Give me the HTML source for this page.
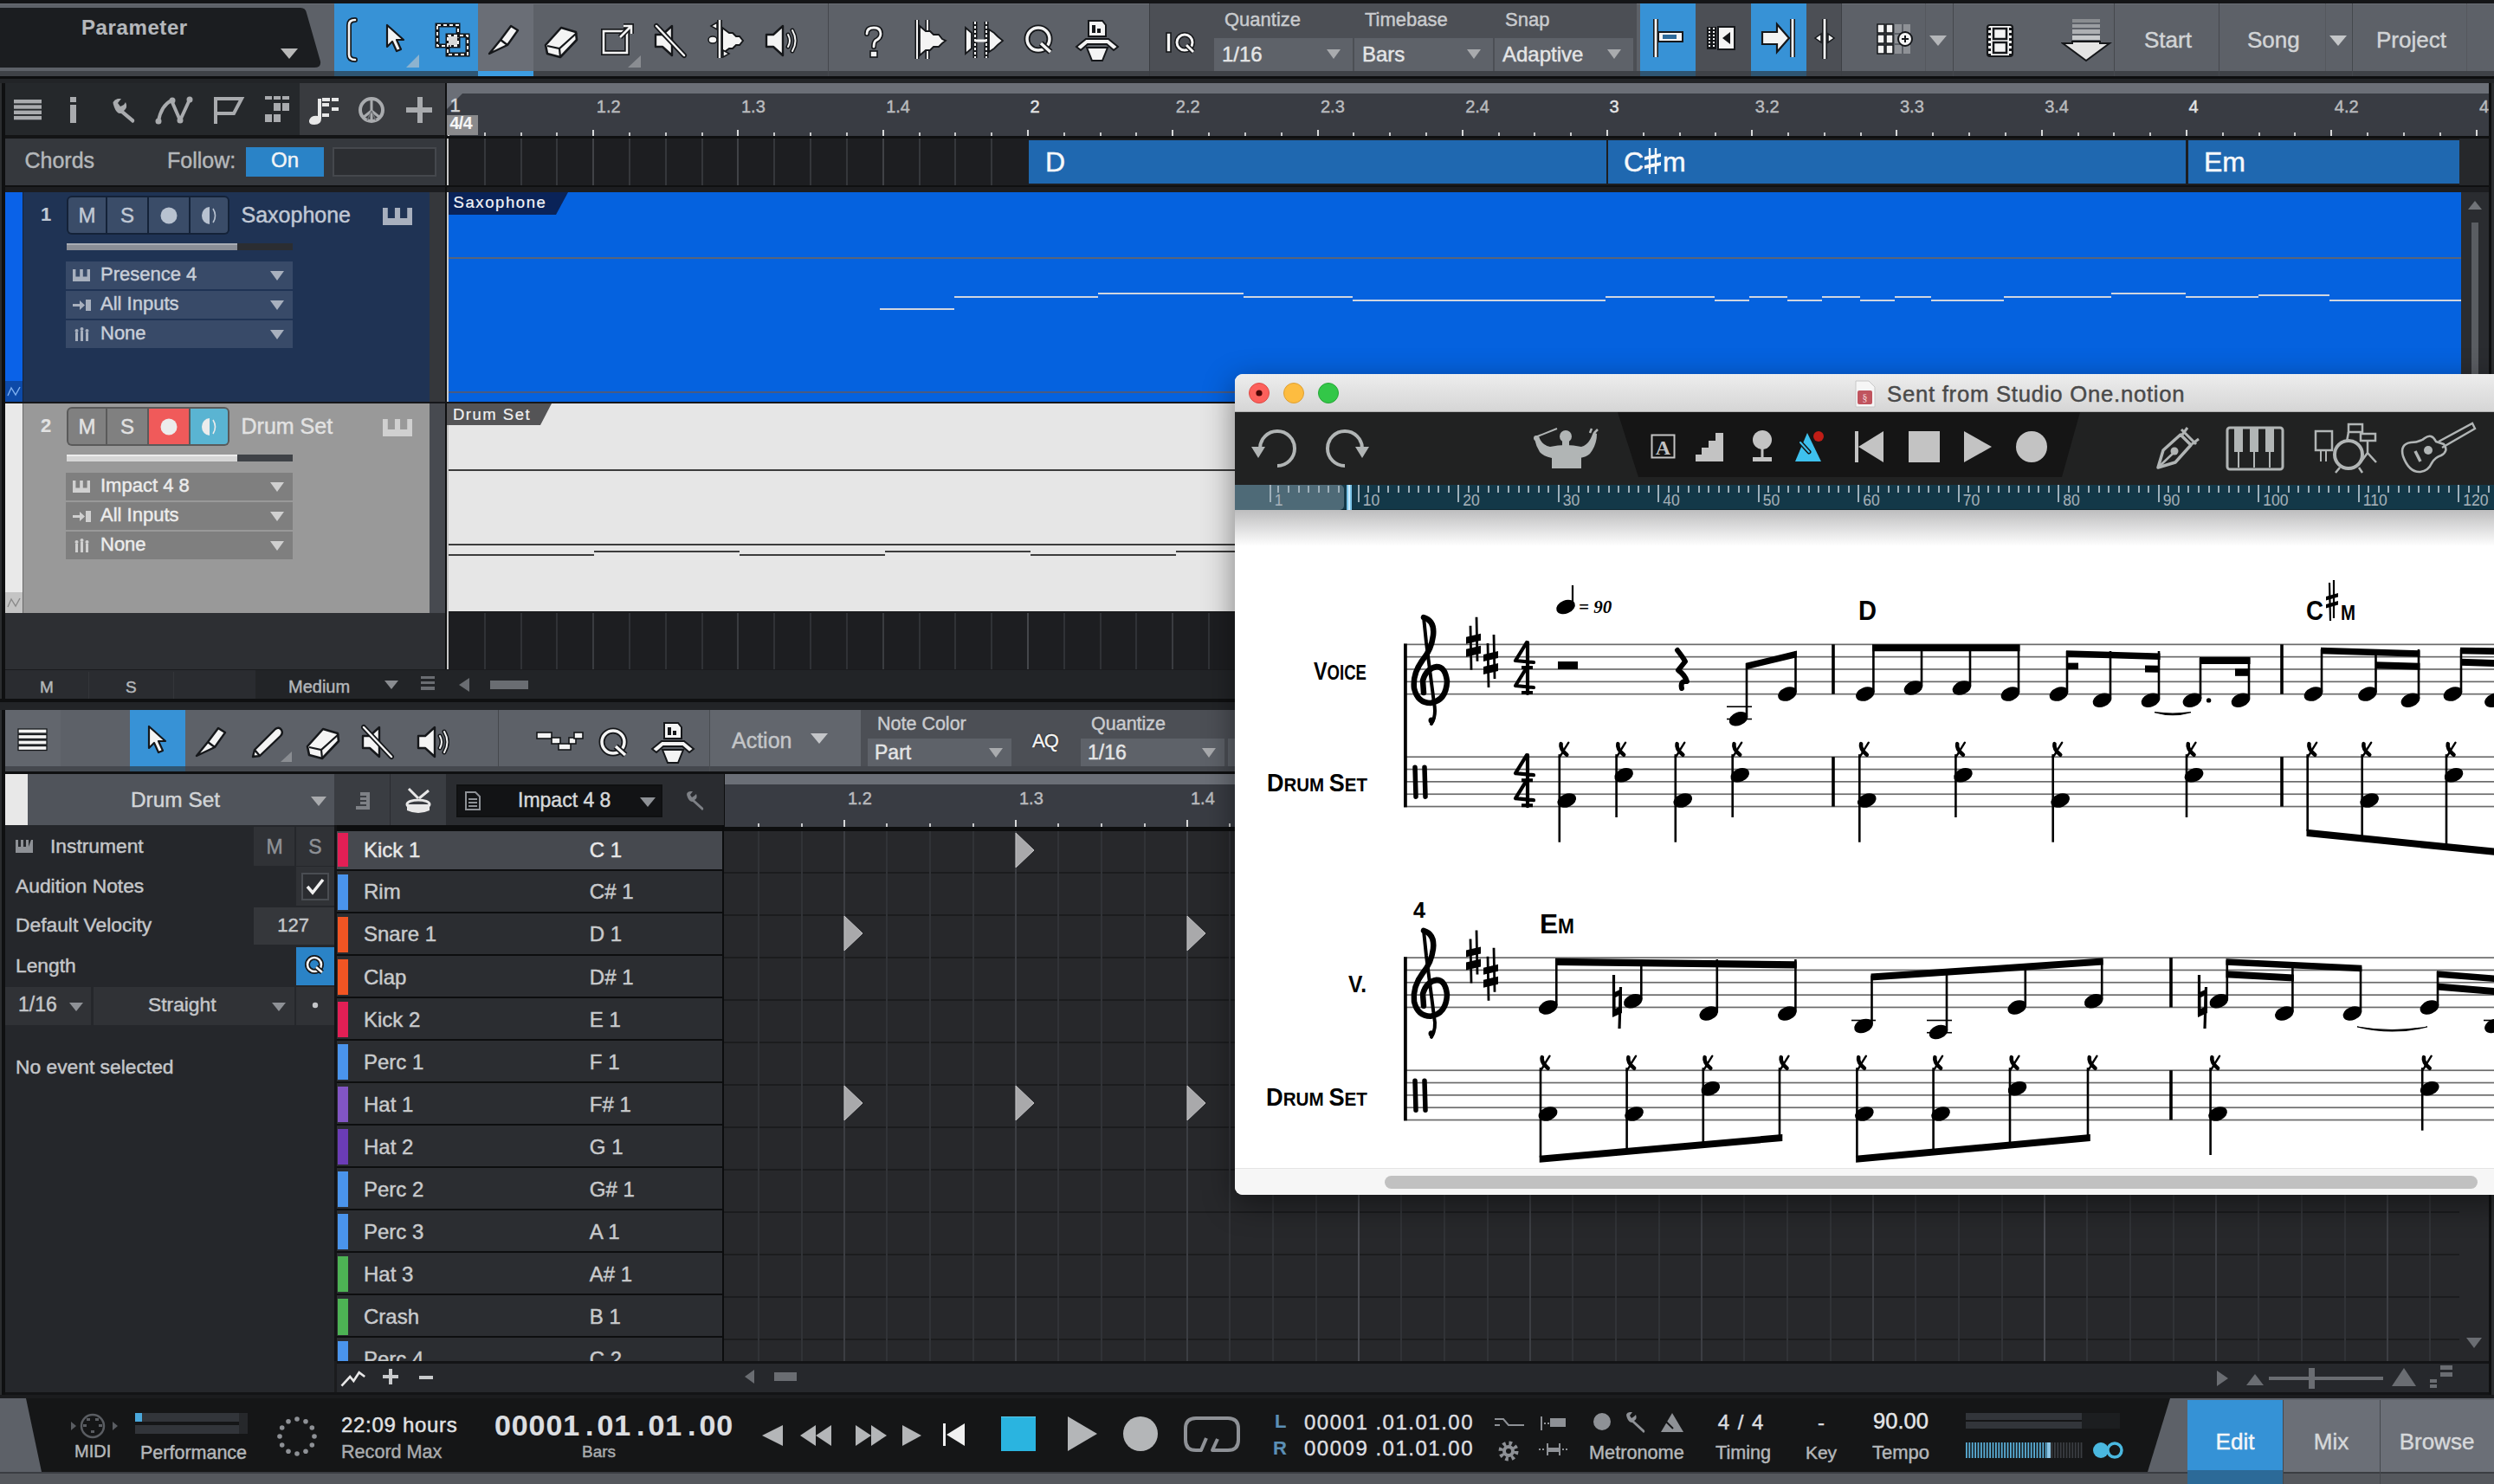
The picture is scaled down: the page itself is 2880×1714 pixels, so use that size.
<!DOCTYPE html>
<html><head><meta charset="utf-8"><style>
html,body{margin:0;padding:0;background:#1b1c1e;}
#root{position:relative;width:2880px;height:1714px;overflow:hidden;background:#1b1c1e;font-family:"Liberation Sans",sans-serif;}
#root div{position:absolute;}
#root .t{line-height:1;white-space:nowrap;-webkit-text-stroke:0.45px currentColor;}
</style></head><body><div id="root">
<div style="left:0px;top:0px;width:2880px;height:4px;background:#141517;"></div>
<div style="left:0px;top:4px;width:2880px;height:78px;background:#5d6168;"></div>
<div style="left:0px;top:4px;width:2880px;height:1px;background:#6a6e75;"></div>
<div style="left:0px;top:82px;width:2880px;height:6px;background:#3f4247;"></div>
<div style="left:0px;top:88px;width:2880px;height:3px;background:#0e0f10;"></div>
<div style="left:0px;top:91px;width:2880px;height:5px;background:#222427;"></div>
<svg style="position:absolute;left:0px;top:9px;" width="372" height="70" viewBox="0 0 372 70"><path d="M0,0 L347,0 Q353,0 354,6 L370,62 Q371,69 363,69 L0,69 Z" fill="#1b1d20"/></svg>
<div class="t" style="left:94.0px;top:19.7px;font-size:24px;color:#b4b7bb;font-weight:700;-webkit-text-stroke:0.15px currentColor;letter-spacing:0.6px;">Parameter</div>
<svg style="position:absolute;left:324.0px;top:56.0px;" width="20" height="12" viewBox="0 0 20 12"><polygon points="0,0 20,0 10.0,12" fill="#b8b8b8"/></svg>
<div style="left:386px;top:4px;width:166px;height:78px;background:#3792d6;"></div>
<div style="left:386px;top:82px;width:166px;height:6px;background:#2f5673;"></div>
<div style="left:552px;top:4px;width:64px;height:78px;background:#6a6e76;"></div>
<div style="left:552px;top:82px;width:64px;height:6px;background:#3d9de2;"></div>
<svg style="position:absolute;left:396px;top:19px;" width="22" height="54" viewBox="0 0 22 54"><path d="M14,4 Q7,4 7,10 L7,44 Q7,50 14,50" fill="none" stroke="#15171a" stroke-width="6" stroke-linecap="round"/><path d="M14,4 Q7,4 7,10 L7,44 Q7,50 14,50" fill="none" stroke="#f4f4f4" stroke-width="2.6" stroke-linecap="round"/></svg>
<svg style="position:absolute;left:444px;top:27px;" width="28" height="38" viewBox="0 0 28 38"><path d="M3,2 L3,27 L9,21 L14,32 L19,30 L14,19 L22,19 Z" fill="#f4f4f4" stroke="#15171a" stroke-width="2.2" stroke-linejoin="round"/></svg>
<svg style="position:absolute;left:469px;top:63px;" width="16" height="16" viewBox="0 0 16 16"><polygon points="15,0 15,15 0,15" fill="#8db3cf"/></svg>
<svg style="position:absolute;left:502px;top:26px;" width="42" height="40" viewBox="0 0 42 40"><rect x="3" y="3" width="24" height="24" fill="none" stroke="#15171a" stroke-width="5"/><rect x="3" y="3" width="24" height="24" fill="none" stroke="#f4f4f4" stroke-width="2" stroke-dasharray="4 3"/><rect x="15" y="15" width="23" height="22" fill="none" stroke="#15171a" stroke-width="5"/><rect x="15" y="15" width="23" height="22" fill="none" stroke="#f4f4f4" stroke-width="2" stroke-dasharray="4 3"/><rect x="16" y="16" width="10" height="10" fill="#d8d8d8"/></svg>
<svg style="position:absolute;left:562px;top:26px;" width="42" height="40" viewBox="0 0 42 40"><path d="M3,36 L16,20 L28,4 L36,9 L24,26 Z M16,20 L24,26" fill="#f4f4f4" stroke="#15171a" stroke-width="2.4" stroke-linejoin="round"/></svg>
<svg style="position:absolute;left:628px;top:26px;" width="42" height="42" viewBox="0 0 42 42"><path d="M2,26 L20,6 L37,11 L38,20 L19,40 L4,36 Z" fill="#f4f4f4" stroke="#15171a" stroke-width="2.6" stroke-linejoin="round"/><path d="M4,27 L18,30 L38,12 M18,30 L19,40" fill="none" stroke="#15171a" stroke-width="2.2"/></svg>
<svg style="position:absolute;left:690px;top:24px;" width="44" height="42" viewBox="0 0 44 42"><rect x="7" y="12" width="27" height="25" fill="none" stroke="#15171a" stroke-width="6"/><rect x="7" y="12" width="27" height="25" fill="none" stroke="#f4f4f4" stroke-width="2.6"/><path d="M26,19 L38,7 M30,6 L39,6 L39,15" fill="none" stroke="#15171a" stroke-width="6"/><path d="M26,19 L38,7 M30,6 L39,6 L39,15" fill="none" stroke="#f4f4f4" stroke-width="2.6"/></svg>
<svg style="position:absolute;left:725px;top:64px;" width="16" height="14" viewBox="0 0 16 14"><polygon points="15,0 15,14 0,14" fill="#8a8d92"/></svg>
<svg style="position:absolute;left:754px;top:26px;" width="42" height="42" viewBox="0 0 42 42"><path d="M3,14 L11,14 L22,4 L22,38 L11,28 L3,28 Z" fill="#f4f4f4" stroke="#15171a" stroke-width="2.4" stroke-linejoin="round"/><path d="M4,4 L36,38" stroke="#15171a" stroke-width="6" stroke-linecap="round"/><path d="M4,4 L36,38" stroke="#f4f4f4" stroke-width="2.5" stroke-linecap="round"/></svg>
<svg style="position:absolute;left:814px;top:20px;" width="50" height="50" viewBox="0 0 50 50"><path d="M17,3 L17,47" stroke="#15171a" stroke-width="6"/><path d="M17,3 L17,47" stroke="#f4f4f4" stroke-width="2.5"/><path d="M20,12 L28,18 L32,18 L36,22 L40,22 L44,27 L40,32 L36,32 L32,36 L28,36 L20,42 Z" fill="#f4f4f4" stroke="#15171a" stroke-width="2"/><path d="M14,6 L7,10 L14,14 Z M21,38 L28,42 L21,46 Z" fill="#f4f4f4" stroke="#15171a" stroke-width="1.5"/><ellipse cx="9" cy="26" rx="5" ry="4" fill="#f4f4f4" stroke="#15171a" stroke-width="1.5"/></svg>
<svg style="position:absolute;left:882px;top:26px;" width="44" height="42" viewBox="0 0 44 42"><path d="M3,14 L11,14 L22,4 L22,38 L11,28 L3,28 Z" fill="#f4f4f4" stroke="#15171a" stroke-width="2.4" stroke-linejoin="round"/><path d="M28,14 Q32,21 28,28 M33,9 Q40,21 33,33" fill="none" stroke="#15171a" stroke-width="5" stroke-linecap="round"/><path d="M28,14 Q32,21 28,28 M33,9 Q40,21 33,33" fill="none" stroke="#f4f4f4" stroke-width="2" stroke-linecap="round"/></svg>
<div style="left:956px;top:4px;width:1px;height:84px;background:#45484d;"></div>
<svg style="position:absolute;left:994px;top:28px;" width="30" height="40" viewBox="0 0 30 40"><path d="M7,11 Q7,4 15,4 Q23,4 23,11 Q23,16 17,19 Q15,21 15,26" fill="none" stroke="#15171a" stroke-width="6" stroke-linecap="round"/><path d="M7,11 Q7,4 15,4 Q23,4 23,11 Q23,16 17,19 Q15,21 15,26" fill="none" stroke="#f4f4f4" stroke-width="2.8" stroke-linecap="round"/><rect x="11" y="31" width="8" height="7" fill="#f4f4f4" stroke="#15171a" stroke-width="1.6"/></svg>
<svg style="position:absolute;left:1054px;top:20px;" width="46" height="52" viewBox="0 0 46 52"><path d="M5,3 L5,48 M17,3 L17,48" stroke="#15171a" stroke-width="5"/><path d="M5,3 L5,48 M17,3 L17,48" stroke="#f4f4f4" stroke-width="2"/><path d="M8,10 L15,16 L20,16 L24,20 L30,20 L34,25 L38,27 L34,30 L30,34 L24,34 L20,38 L15,38 L8,44 Z" fill="#f4f4f4" stroke="#15171a" stroke-width="1.8"/></svg>
<svg style="position:absolute;left:1112px;top:20px;" width="50" height="52" viewBox="0 0 50 52"><path d="M14,5 L14,47 M27,5 L27,47" stroke="#15171a" stroke-width="5" /><path d="M14,5 L14,47 M27,5 L27,47" stroke="#f4f4f4" stroke-width="2" stroke-dasharray="3 2"/><path d="M3,12 L10,18 L10,36 L3,42 Z M30,14 L36,18 L40,22 L46,27 L40,32 L36,36 L30,40 Z" fill="#f4f4f4" stroke="#15171a" stroke-width="1.8"/><path d="M14,27 L27,27" stroke="#f4f4f4" stroke-width="3"/></svg>
<svg style="position:absolute;left:1182px;top:26px;" width="38" height="42" viewBox="0 0 38 42"><circle cx="17" cy="19" r="13" fill="none" stroke="#15171a" stroke-width="7"/><circle cx="17" cy="19" r="13" fill="none" stroke="#f4f4f4" stroke-width="3.5"/><path d="M20,24 L31,34" stroke="#15171a" stroke-width="7"/><path d="M20,24 L31,34" stroke="#f4f4f4" stroke-width="3.5"/></svg>
<svg style="position:absolute;left:1240px;top:20px;" width="54" height="52" viewBox="0 0 54 52"><path d="M17,4 L33,4 L37,9 L37,22 L17,22 Z" fill="#f4f4f4" stroke="#15171a" stroke-width="2"/><rect x="21" y="9" width="4" height="9" fill="#15171a"/><rect x="27" y="13" width="4" height="5" fill="#15171a"/><path d="M3,34 L14,25 L40,25 L51,34 L46,38 L38,31 L16,31 L8,38 Z" fill="#f4f4f4" stroke="#15171a" stroke-width="2"/><path d="M15,35 L39,35 L33,50 L21,50 Z" fill="#f4f4f4" stroke="#15171a" stroke-width="2"/></svg>
<div style="left:1327px;top:4px;width:563px;height:78px;background:#4c4f55;"></div>
<div style="left:1327px;top:4px;width:1px;height:84px;background:#3a3d42;"></div>
<svg style="position:absolute;left:1344px;top:32px;" width="40" height="34" viewBox="0 0 40 34"><rect x="3" y="6" width="5" height="22" fill="#f4f4f4" stroke="#15171a" stroke-width="1.6"/><circle cx="24" cy="17" r="9" fill="none" stroke="#15171a" stroke-width="6"/><circle cx="24" cy="17" r="9" fill="none" stroke="#f4f4f4" stroke-width="3"/><path d="M26,20 L34,28" stroke="#15171a" stroke-width="6"/><path d="M26,20 L34,28" stroke="#f4f4f4" stroke-width="3"/></svg>
<div style="left:1402px;top:44px;width:160px;height:38px;background:#5e6269;"></div>
<div class="t" style="left:1414.0px;top:12.4px;font-size:22px;color:#c9cbce;font-weight:400;">Quantize</div>
<div class="t" style="left:1411.0px;top:50.7px;font-size:24px;color:#e4e5e6;font-weight:400;">1/16</div>
<svg style="position:absolute;left:1532.0px;top:56.5px;" width="16" height="11" viewBox="0 0 16 11"><polygon points="0,0 16,0 8.0,11" fill="#a9abae"/></svg>
<div style="left:1564px;top:44px;width:160px;height:38px;background:#5e6269;"></div>
<div class="t" style="left:1576.0px;top:12.4px;font-size:22px;color:#c9cbce;font-weight:400;">Timebase</div>
<div class="t" style="left:1573.0px;top:50.7px;font-size:24px;color:#e4e5e6;font-weight:400;">Bars</div>
<svg style="position:absolute;left:1694.0px;top:56.5px;" width="16" height="11" viewBox="0 0 16 11"><polygon points="0,0 16,0 8.0,11" fill="#a9abae"/></svg>
<div style="left:1726px;top:44px;width:160px;height:38px;background:#5e6269;"></div>
<div class="t" style="left:1738.0px;top:12.4px;font-size:22px;color:#c9cbce;font-weight:400;">Snap</div>
<div class="t" style="left:1735.0px;top:50.7px;font-size:24px;color:#e4e5e6;font-weight:400;">Adaptive</div>
<svg style="position:absolute;left:1856.0px;top:56.5px;" width="16" height="11" viewBox="0 0 16 11"><polygon points="0,0 16,0 8.0,11" fill="#a9abae"/></svg>
<div style="left:1894px;top:4px;width:64px;height:78px;background:#3792d6;"></div>
<div style="left:1894px;top:82px;width:64px;height:6px;background:#2f5673;"></div>
<div style="left:1958px;top:4px;width:64px;height:78px;background:#4c4f55;"></div>
<div style="left:2022px;top:4px;width:64px;height:78px;background:#3792d6;"></div>
<div style="left:2022px;top:82px;width:64px;height:6px;background:#2f5673;"></div>
<div style="left:2086px;top:4px;width:40px;height:78px;background:#4c4f55;"></div>
<svg style="position:absolute;left:1906px;top:18px;" width="42" height="52" viewBox="0 0 42 52"><path d="M6,4 L6,48" stroke="#15171a" stroke-width="6"/><path d="M6,4 L6,48" stroke="#f4f4f4" stroke-width="2.8"/><rect x="9" y="19" width="28" height="11" fill="#f4f4f4" stroke="#15171a" stroke-width="2"/><rect x="14" y="22" width="16" height="5" fill="#2d6a9a"/></svg>
<svg style="position:absolute;left:1968px;top:28px;" width="42" height="34" viewBox="0 0 42 34"><rect x="3" y="3" width="11" height="26" fill="#15171a"/><path d="M6,4 L6,28 M11,4 L11,28" stroke="#f4f4f4" stroke-width="2" stroke-dasharray="2 2"/><rect x="16" y="3" width="19" height="26" fill="#f4f4f4" stroke="#15171a" stroke-width="2"/><polygon points="30,9 21,16 30,23" fill="#15171a"/></svg>
<svg style="position:absolute;left:2032px;top:18px;" width="46" height="52" viewBox="0 0 46 52"><path d="M38,4 L38,48" stroke="#15171a" stroke-width="6"/><path d="M38,4 L38,48" stroke="#f4f4f4" stroke-width="2.8"/><path d="M3,19 L20,19 L20,10 L34,26 L20,42 L20,33 L3,33 Z" fill="#f4f4f4" stroke="#15171a" stroke-width="2.2"/></svg>
<svg style="position:absolute;left:2094px;top:20px;" width="26" height="50" viewBox="0 0 26 50"><path d="M13,2 L13,48" stroke="#15171a" stroke-width="6"/><path d="M13,2 L13,48" stroke="#f4f4f4" stroke-width="2.8"/><polygon points="9,19 2,24 9,29" fill="#f4f4f4" stroke="#15171a" stroke-width="1.5"/><polygon points="17,19 24,24 17,29" fill="#f4f4f4" stroke="#15171a" stroke-width="1.5"/></svg>
<div style="left:2126px;top:4px;width:1px;height:84px;background:#3d4045;"></div>
<svg style="position:absolute;left:2166px;top:26px;" width="52" height="40" viewBox="0 0 52 40"><rect x="2" y="2" width="8" height="10" fill="#f4f4f4" stroke="#15171a" stroke-width="1.5"/><rect x="12" y="2" width="8" height="10" fill="#f4f4f4" stroke="#15171a" stroke-width="1.5"/><rect x="2" y="14" width="8" height="10" fill="#f4f4f4" stroke="#15171a" stroke-width="1.5"/><rect x="12" y="14" width="8" height="10" fill="#f4f4f4" stroke="#15171a" stroke-width="1.5"/><rect x="2" y="26" width="8" height="10" fill="#f4f4f4" stroke="#15171a" stroke-width="1.5"/><rect x="12" y="26" width="8" height="10" fill="#f4f4f4" stroke="#15171a" stroke-width="1.5"/><rect x="22" y="2" width="8" height="10" fill="#8e9196"/><rect x="32" y="2" width="8" height="10" fill="#8e9196"/><rect x="22" y="14" width="8" height="10" fill="#8e9196"/><rect x="32" y="14" width="8" height="10" fill="#8e9196"/><rect x="22" y="26" width="8" height="10" fill="#8e9196"/><rect x="32" y="26" width="8" height="10" fill="#8e9196"/><circle cx="34" cy="19" r="8" fill="#f4f4f4" stroke="#15171a" stroke-width="2"/><path d="M30,19 L38,19 M34,15 L34,23" stroke="#15171a" stroke-width="2"/></svg>
<svg style="position:absolute;left:2228.0px;top:41.0px;" width="20" height="12" viewBox="0 0 20 12"><polygon points="0,0 20,0 10.0,12" fill="#b4b6b9"/></svg>
<div style="left:2223px;top:4px;width:1px;height:78px;background:#55585e;"></div>
<div style="left:2255px;top:4px;width:1px;height:84px;background:#45484d;"></div>
<svg style="position:absolute;left:2292px;top:26px;" width="36" height="42" viewBox="0 0 36 42"><rect x="3" y="3" width="29" height="36" rx="3" fill="#f4f4f4" stroke="#15171a" stroke-width="2.2"/><rect x="10" y="7" width="15" height="12" fill="#f4f4f4" stroke="#15171a" stroke-width="2.5"/><rect x="10" y="23" width="15" height="12" fill="#f4f4f4" stroke="#15171a" stroke-width="2.5"/><rect x="4" y="6" width="3" height="3" fill="#15171a"/><rect x="28" y="6" width="3" height="3" fill="#15171a"/><rect x="4" y="12" width="3" height="3" fill="#15171a"/><rect x="28" y="12" width="3" height="3" fill="#15171a"/><rect x="4" y="18" width="3" height="3" fill="#15171a"/><rect x="28" y="18" width="3" height="3" fill="#15171a"/><rect x="4" y="24" width="3" height="3" fill="#15171a"/><rect x="28" y="24" width="3" height="3" fill="#15171a"/><rect x="4" y="30" width="3" height="3" fill="#15171a"/><rect x="28" y="30" width="3" height="3" fill="#15171a"/><rect x="4" y="36" width="3" height="3" fill="#15171a"/><rect x="28" y="36" width="3" height="3" fill="#15171a"/></svg>
<svg style="position:absolute;left:2380px;top:20px;" width="60" height="52" viewBox="0 0 60 52"><rect x="13" y="2" width="32" height="4" fill="#8a8d91"/><rect x="13" y="8" width="32" height="4" fill="#9a9da1"/><rect x="13" y="14" width="32" height="5" fill="#aeb0b3"/><rect x="13" y="21" width="32" height="5" fill="#c6c8ca"/><path d="M13,28 L45,28 L45,30 L56,30 L29,50 L2,30 L13,30 Z" fill="#e4e4e4" stroke="#15171a" stroke-width="2"/></svg>
<div style="left:2441px;top:4px;width:1px;height:84px;background:#45484d;"></div>
<div class="t" style="left:2476.0px;top:33.0px;font-size:26px;color:#d2d4d6;font-weight:400;">Start</div>
<div style="left:2562px;top:4px;width:1px;height:84px;background:#45484d;"></div>
<div class="t" style="left:2595.0px;top:33.0px;font-size:26px;color:#d2d4d6;font-weight:400;">Song</div>
<svg style="position:absolute;left:2690.0px;top:41.0px;" width="20" height="12" viewBox="0 0 20 12"><polygon points="0,0 20,0 10.0,12" fill="#c4c6c8"/></svg>
<div style="left:2685px;top:4px;width:1px;height:78px;background:#55585e;"></div>
<div style="left:2716px;top:4px;width:1px;height:84px;background:#45484d;"></div>
<div class="t" style="left:2744.0px;top:33.0px;font-size:26px;color:#d2d4d6;font-weight:400;">Project</div>
<div style="left:2848px;top:4px;width:1px;height:78px;background:#55585e;"></div>
<div style="left:0px;top:96px;width:6px;height:711px;background:#0f1011;"></div>
<div style="left:0px;top:96px;width:2px;height:711px;background:#2b2d2f;"></div>
<div style="left:6px;top:96px;width:340px;height:60px;background:#25282b;"></div>
<div style="left:346px;top:96px;width:168px;height:60px;background:#393b3f;"></div>
<div style="left:6px;top:156px;width:507px;height:4px;background:#131415;"></div>
<div style="left:6px;top:160px;width:508px;height:54px;background:#35383d;"></div>
<div style="left:6px;top:214px;width:2868px;height:2px;background:#0f1011;"></div>
<div style="left:6px;top:216px;width:2868px;height:6px;background:#1c1d20;"></div>
<div style="left:514px;top:96px;width:2px;height:711px;background:#0f1011;"></div>
<svg style="position:absolute;left:16px;top:115px;" width="32" height="24" viewBox="0 0 32 24"><rect x="0" y="0.0" width="32" height="4.4" fill="#a9abae"/><rect x="0" y="6.3" width="32" height="4.4" fill="#a9abae"/><rect x="0" y="12.6" width="32" height="4.4" fill="#a9abae"/><rect x="0" y="18.9" width="32" height="4.4" fill="#a9abae"/></svg>
<svg style="position:absolute;left:81px;top:112px;" width="8" height="31" viewBox="0 0 8 31"><rect x="0" y="0" width="7" height="6" fill="#a9abae"/><rect x="0" y="9" width="7" height="21" fill="#a9abae"/></svg>
<svg style="position:absolute;left:126px;top:112px;" width="32" height="32" viewBox="0 0 32 32"><path d="M6,12 Q2,4 10,2 L14,2 L10,7 L13,11 L17,9 L19,6 Q22,12 17,16 L29,26 Q30,29 27,30 L14,19 Q9,20 6,12 Z" fill="#a9abae"/></svg>
<svg style="position:absolute;left:178px;top:110px;" width="50" height="36" viewBox="0 0 50 36"><path d="M5,30 Q8,12 20,6 L30,29 L41,5" fill="none" stroke="#a9abae" stroke-width="4" stroke-linejoin="round"/><circle cx="5" cy="30" r="3.5" fill="#a9abae"/><circle cx="21" cy="6" r="3.5" fill="#a9abae"/><circle cx="30" cy="29" r="3.5" fill="#a9abae"/><circle cx="41" cy="5" r="3.5" fill="#a9abae"/></svg>
<svg style="position:absolute;left:247px;top:111px;" width="36" height="34" viewBox="0 0 36 34"><path d="M2,32 L2,3 L32,3 L23,20 L2,20" fill="none" stroke="#a9abae" stroke-width="4"/></svg>
<svg style="position:absolute;left:306px;top:111px;" width="30" height="34" viewBox="0 0 30 34"><rect x="0" y="0" width="8" height="4" fill="#a9abae"/><rect x="10" y="0" width="8" height="4" fill="#a9abae"/><rect x="20" y="0" width="8" height="4" fill="#a9abae"/><rect x="10" y="8" width="8" height="9" fill="#a9abae"/><rect x="20" y="8" width="8" height="9" fill="#a9abae"/><rect x="0" y="21" width="8" height="9" fill="#a9abae"/><rect x="10" y="21" width="8" height="9" fill="#a9abae"/></svg>
<svg style="position:absolute;left:355px;top:111px;" width="38" height="34" viewBox="0 0 38 34"><path d="M12,3 L16,3 L16,26 Q16,33 8,33 Q1,33 2,28 Q4,22 12,23 Z" fill="#e8e8e8"/><rect x="17" y="2" width="9" height="4" fill="#e8e8e8"/><rect x="17" y="8" width="8" height="4" fill="#e8e8e8"/><rect x="17" y="20" width="8" height="4" fill="#e8e8e8"/><rect x="28" y="2" width="8" height="4" fill="#e8e8e8"/><rect x="28" y="13" width="8" height="4" fill="#e8e8e8"/></svg>
<svg style="position:absolute;left:413px;top:111px;" width="32" height="32" viewBox="0 0 32 32"><circle cx="16" cy="16" r="13" fill="none" stroke="#a9abae" stroke-width="4"/><path d="M16,3 L16,29 M16,17 L6,25 M16,17 L26,25" stroke="#a9abae" stroke-width="3" fill="none"/><path d="M16,17 L11,28 M16,17 L21,28" stroke="#707276" stroke-width="1.5"/></svg>
<svg style="position:absolute;left:469px;top:112px;" width="32" height="32" viewBox="0 0 32 32"><rect x="13" y="0" width="6" height="30" fill="#a9abae"/><rect x="0" y="12" width="30" height="6" fill="#a9abae"/></svg>
<div class="t" style="left:28.5px;top:173.4px;font-size:25px;color:#b4b7ba;font-weight:400;">Chords</div>
<div class="t" style="left:193.0px;top:173.4px;font-size:25px;color:#b4b7ba;font-weight:400;">Follow:</div>
<div style="left:284px;top:170px;width:90px;height:34px;background:#2a83c7;"></div>
<div class="t" style="left:284.0px;top:173.3px;font-size:24px;color:#f2f4f6;font-weight:400;width:90px;text-align:center;">On</div>
<div style="left:384px;top:170px;width:120px;height:34px;background:#45484d;"></div>
<div style="left:386px;top:172px;width:116px;height:30px;background:#2c2e32;"></div>
<div style="left:516px;top:96px;width:2358px;height:12px;background:#6b6f77;"></div>
<div style="left:516px;top:108px;width:2358px;height:49px;background:#393c43;"></div>
<svg style="position:absolute;left:516px;top:107px;" width="20" height="20" viewBox="0 0 20 20"><polygon points="0,0 19,0 0,19" fill="#6b6f77"/></svg>
<div style="left:516px;top:157px;width:2358px;height:3px;background:#0f1011;"></div>
<div style="left:517px;top:150px;width:2px;height:7px;background:#d8d9da;"></div>
<div style="left:559px;top:153px;width:2px;height:4px;background:#c9cacc;"></div>
<div style="left:601px;top:153px;width:2px;height:4px;background:#c9cacc;"></div>
<div style="left:642px;top:153px;width:2px;height:4px;background:#c9cacc;"></div>
<div style="left:684px;top:150px;width:2px;height:7px;background:#d8d9da;"></div>
<div style="left:726px;top:153px;width:2px;height:4px;background:#c9cacc;"></div>
<div style="left:768px;top:153px;width:2px;height:4px;background:#c9cacc;"></div>
<div style="left:810px;top:153px;width:2px;height:4px;background:#c9cacc;"></div>
<div style="left:851px;top:150px;width:2px;height:7px;background:#d8d9da;"></div>
<div style="left:893px;top:153px;width:2px;height:4px;background:#c9cacc;"></div>
<div style="left:935px;top:153px;width:2px;height:4px;background:#c9cacc;"></div>
<div style="left:977px;top:153px;width:2px;height:4px;background:#c9cacc;"></div>
<div style="left:1019px;top:150px;width:2px;height:7px;background:#d8d9da;"></div>
<div style="left:1061px;top:153px;width:2px;height:4px;background:#c9cacc;"></div>
<div style="left:1102px;top:153px;width:2px;height:4px;background:#c9cacc;"></div>
<div style="left:1144px;top:153px;width:2px;height:4px;background:#c9cacc;"></div>
<div style="left:1186px;top:150px;width:2px;height:7px;background:#d8d9da;"></div>
<div style="left:1228px;top:153px;width:2px;height:4px;background:#c9cacc;"></div>
<div style="left:1270px;top:153px;width:2px;height:4px;background:#c9cacc;"></div>
<div style="left:1311px;top:153px;width:2px;height:4px;background:#c9cacc;"></div>
<div style="left:1353px;top:150px;width:2px;height:7px;background:#d8d9da;"></div>
<div style="left:1395px;top:153px;width:2px;height:4px;background:#c9cacc;"></div>
<div style="left:1437px;top:153px;width:2px;height:4px;background:#c9cacc;"></div>
<div style="left:1479px;top:153px;width:2px;height:4px;background:#c9cacc;"></div>
<div style="left:1521px;top:150px;width:2px;height:7px;background:#d8d9da;"></div>
<div style="left:1562px;top:153px;width:2px;height:4px;background:#c9cacc;"></div>
<div style="left:1604px;top:153px;width:2px;height:4px;background:#c9cacc;"></div>
<div style="left:1646px;top:153px;width:2px;height:4px;background:#c9cacc;"></div>
<div style="left:1688px;top:150px;width:2px;height:7px;background:#d8d9da;"></div>
<div style="left:1730px;top:153px;width:2px;height:4px;background:#c9cacc;"></div>
<div style="left:1771px;top:153px;width:2px;height:4px;background:#c9cacc;"></div>
<div style="left:1813px;top:153px;width:2px;height:4px;background:#c9cacc;"></div>
<div style="left:1855px;top:150px;width:2px;height:7px;background:#d8d9da;"></div>
<div style="left:1897px;top:153px;width:2px;height:4px;background:#c9cacc;"></div>
<div style="left:1939px;top:153px;width:2px;height:4px;background:#c9cacc;"></div>
<div style="left:1980px;top:153px;width:2px;height:4px;background:#c9cacc;"></div>
<div style="left:2022px;top:150px;width:2px;height:7px;background:#d8d9da;"></div>
<div style="left:2064px;top:153px;width:2px;height:4px;background:#c9cacc;"></div>
<div style="left:2106px;top:153px;width:2px;height:4px;background:#c9cacc;"></div>
<div style="left:2148px;top:153px;width:2px;height:4px;background:#c9cacc;"></div>
<div style="left:2189px;top:150px;width:2px;height:7px;background:#d8d9da;"></div>
<div style="left:2231px;top:153px;width:2px;height:4px;background:#c9cacc;"></div>
<div style="left:2273px;top:153px;width:2px;height:4px;background:#c9cacc;"></div>
<div style="left:2315px;top:153px;width:2px;height:4px;background:#c9cacc;"></div>
<div style="left:2357px;top:150px;width:2px;height:7px;background:#d8d9da;"></div>
<div style="left:2399px;top:153px;width:2px;height:4px;background:#c9cacc;"></div>
<div style="left:2440px;top:153px;width:2px;height:4px;background:#c9cacc;"></div>
<div style="left:2482px;top:153px;width:2px;height:4px;background:#c9cacc;"></div>
<div style="left:2524px;top:150px;width:2px;height:7px;background:#d8d9da;"></div>
<div style="left:2566px;top:153px;width:2px;height:4px;background:#c9cacc;"></div>
<div style="left:2608px;top:153px;width:2px;height:4px;background:#c9cacc;"></div>
<div style="left:2649px;top:153px;width:2px;height:4px;background:#c9cacc;"></div>
<div style="left:2691px;top:150px;width:2px;height:7px;background:#d8d9da;"></div>
<div style="left:2733px;top:153px;width:2px;height:4px;background:#c9cacc;"></div>
<div style="left:2775px;top:153px;width:2px;height:4px;background:#c9cacc;"></div>
<div style="left:2817px;top:153px;width:2px;height:4px;background:#c9cacc;"></div>
<div style="left:2859px;top:150px;width:2px;height:7px;background:#d8d9da;"></div>
<div class="t" style="left:519.5px;top:111.4px;font-size:22px;color:#d4d6d8;font-weight:400;">1</div>
<div class="t" style="left:688.8px;top:113.1px;font-size:20px;color:#b9bbbe;font-weight:400;">1.2</div>
<div class="t" style="left:856.0px;top:113.1px;font-size:20px;color:#b9bbbe;font-weight:400;">1.3</div>
<div class="t" style="left:1023.2px;top:113.1px;font-size:20px;color:#b9bbbe;font-weight:400;">1.4</div>
<div class="t" style="left:1189.5px;top:113.1px;font-size:20px;color:#e4e5e6;font-weight:400;">2</div>
<div class="t" style="left:1357.8px;top:113.1px;font-size:20px;color:#b9bbbe;font-weight:400;">2.2</div>
<div class="t" style="left:1525.0px;top:113.1px;font-size:20px;color:#b9bbbe;font-weight:400;">2.3</div>
<div class="t" style="left:1692.2px;top:113.1px;font-size:20px;color:#b9bbbe;font-weight:400;">2.4</div>
<div class="t" style="left:1858.5px;top:113.1px;font-size:20px;color:#e4e5e6;font-weight:400;">3</div>
<div class="t" style="left:2026.8px;top:113.1px;font-size:20px;color:#b9bbbe;font-weight:400;">3.2</div>
<div class="t" style="left:2194.0px;top:113.1px;font-size:20px;color:#b9bbbe;font-weight:400;">3.3</div>
<div class="t" style="left:2361.2px;top:113.1px;font-size:20px;color:#b9bbbe;font-weight:400;">3.4</div>
<div class="t" style="left:2527.5px;top:113.1px;font-size:20px;color:#e4e5e6;font-weight:400;">4</div>
<div class="t" style="left:2695.8px;top:113.1px;font-size:20px;color:#b9bbbe;font-weight:400;">4.2</div>
<div class="t" style="left:2863.0px;top:113.1px;font-size:20px;color:#b9bbbe;font-weight:400;">4.3</div>
<div class="t" style="left:3030.2px;top:113.1px;font-size:20px;color:#b9bbbe;font-weight:400;">4.4</div>
<div class="t" style="left:3196.5px;top:113.1px;font-size:20px;color:#e4e5e6;font-weight:400;">4</div>
<div style="left:516px;top:133px;width:36px;height:23px;background:#8a8a8c;"></div>
<div class="t" style="left:519.5px;top:132.7px;font-size:19.5px;color:#f6f6f6;font-weight:700;-webkit-text-stroke:0.15px currentColor;letter-spacing:-0.5px;">4/4</div>
<div style="left:516px;top:160px;width:2358px;height:54px;background:#1d1e21;"></div>
<div style="left:559px;top:160px;width:2px;height:54px;background:#35373b;"></div>
<div style="left:601px;top:160px;width:2px;height:54px;background:#35373b;"></div>
<div style="left:642px;top:160px;width:2px;height:54px;background:#35373b;"></div>
<div style="left:684px;top:160px;width:2px;height:54px;background:#404246;"></div>
<div style="left:726px;top:160px;width:2px;height:54px;background:#35373b;"></div>
<div style="left:768px;top:160px;width:2px;height:54px;background:#35373b;"></div>
<div style="left:810px;top:160px;width:2px;height:54px;background:#35373b;"></div>
<div style="left:851px;top:160px;width:2px;height:54px;background:#404246;"></div>
<div style="left:893px;top:160px;width:2px;height:54px;background:#35373b;"></div>
<div style="left:935px;top:160px;width:2px;height:54px;background:#35373b;"></div>
<div style="left:977px;top:160px;width:2px;height:54px;background:#35373b;"></div>
<div style="left:1019px;top:160px;width:2px;height:54px;background:#404246;"></div>
<div style="left:1061px;top:160px;width:2px;height:54px;background:#35373b;"></div>
<div style="left:1102px;top:160px;width:2px;height:54px;background:#35373b;"></div>
<div style="left:1144px;top:160px;width:2px;height:54px;background:#35373b;"></div>
<div style="left:1188px;top:162px;width:667px;height:50px;background:#1f68b0;"></div>
<div style="left:1857px;top:162px;width:667px;height:50px;background:#1f68b0;"></div>
<div style="left:2527px;top:162px;width:313px;height:50px;background:#1f68b0;"></div>
<div class="t" style="left:1207.0px;top:171.4px;font-size:32px;color:#f6f8fa;font-weight:400;">D</div>
<div class="t" style="left:1875.0px;top:171.4px;font-size:32px;color:#f6f8fa;font-weight:400;">C</div>
<svg style="position:absolute;left:1897px;top:170px;" width="22" height="32" viewBox="0 0 22 32"><path d="M8,1 L8,31 M15,1 L15,31" stroke="#f6f8fa" stroke-width="2.4"/><polygon points="2,11 21,7 21,11 2,15" fill="#f6f8fa"/><polygon points="2,21 21,17 21,21 2,25" fill="#f6f8fa"/></svg>
<div class="t" style="left:1920.0px;top:171.4px;font-size:32px;color:#f6f8fa;font-weight:400;">m</div>
<div class="t" style="left:2545.0px;top:171.4px;font-size:32px;color:#f6f8fa;font-weight:400;">Em</div>
<div style="left:2840px;top:160px;width:34px;height:54px;background:#26282b;"></div>
<div style="left:516px;top:160px;width:2px;height:54px;background:#c8c8c8;"></div>
<div style="left:6px;top:222px;width:20px;height:218px;background:#0a62e8;"></div>
<div style="left:6px;top:440px;width:20px;height:24px;background:#0d4aa8;"></div>
<svg style="position:absolute;left:8px;top:445px;" width="16" height="14" viewBox="0 0 16 14"><path d="M1,12 L5,3 L10,11 L15,2" fill="none" stroke="#7fb0f0" stroke-width="1.4"/></svg>
<div style="left:26px;top:222px;width:1px;height:242px;background:#15233a;"></div>
<div style="left:27px;top:222px;width:469px;height:242px;background:#1f3354;"></div>
<div class="t" style="left:47.0px;top:237.4px;font-size:22px;color:#c0c8d4;font-weight:700;-webkit-text-stroke:0.15px currentColor;">1</div>
<div style="left:77px;top:226px;width:188px;height:45px;border-radius:6px;background:#142238;"></div>
<div style="left:79px;top:228px;width:43px;height:41px;background:#3a4c68;border-radius:4px 0 0 4px;"></div>
<div style="left:124px;top:228px;width:46px;height:41px;background:#3a4c68;"></div>
<div style="left:172px;top:228px;width:46px;height:41px;background:#3a4c68;"></div>
<div style="left:220px;top:228px;width:43px;height:41px;background:#3a4c68;border-radius:0 4px 4px 0;"></div>
<div class="t" style="left:80.5px;top:236.7px;font-size:24px;color:#c0c8d4;font-weight:400;width:40px;text-align:center;">M</div>
<div class="t" style="left:127.0px;top:236.7px;font-size:24px;color:#c0c8d4;font-weight:400;width:40px;text-align:center;">S</div>
<svg style="position:absolute;left:185px;top:239px;" width="20" height="20" viewBox="0 0 20 20"><circle cx="10" cy="10" r="9.5" fill="#b8c2d0"/></svg>
<svg style="position:absolute;left:232px;top:237px;" width="22" height="24" viewBox="0 0 22 24"><path d="M10,2 A9,10 0 0 0 10,22 Z" fill="#b8c2d0"/><path d="M14,4 Q19,12 14,20" fill="none" stroke="#b8c2d0" stroke-width="1.6"/></svg>
<div class="t" style="left:278.5px;top:236.3px;font-size:25px;color:#c0c8d4;font-weight:400;">Saxophone</div>
<svg style="position:absolute;left:442px;top:240px;" width="34" height="20" viewBox="0 0 34 20"><path d="M0,0 L5.78,0 L5.78,12.0 L13.94,12.0 L13.94,0 L20.06,0 L20.06,12.0 L28.22,12.0 L28.22,0 L34,0 L34,20 L0,20 Z" fill="#a8b0be"/></svg>
<div style="left:77px;top:281px;width:261px;height:8px;background:#2b2d31;"></div>
<div style="left:77px;top:281px;width:197px;height:8px;background:#8a8e96;"></div>
<div style="left:77px;top:281px;width:197px;height:2px;background:#a9adb4;"></div>
<div style="left:76px;top:302px;width:262px;height:32px;background:#384a68;"></div>
<div class="t" style="left:116.0px;top:306.4px;font-size:22px;color:#c8ced8;font-weight:400;">Presence 4</div>
<svg style="position:absolute;left:312.0px;top:312.5px;" width="16" height="11" viewBox="0 0 16 11"><polygon points="0,0 16,0 8.0,11" fill="#a8b0be"/></svg>
<svg style="position:absolute;left:84px;top:311px;" width="20" height="14" viewBox="0 0 20 14"><path d="M0,0 L3.4000000000000004,0 L3.4000000000000004,8.4 L8.2,8.4 L8.2,0 L11.799999999999999,0 L11.799999999999999,8.4 L16.599999999999998,8.4 L16.599999999999998,0 L20,0 L20,14 L0,14 Z" fill="#a8b0be"/></svg>
<div style="left:76px;top:336px;width:262px;height:32px;background:#384a68;"></div>
<div class="t" style="left:116.0px;top:340.4px;font-size:22px;color:#c8ced8;font-weight:400;">All Inputs</div>
<svg style="position:absolute;left:312.0px;top:346.5px;" width="16" height="11" viewBox="0 0 16 11"><polygon points="0,0 16,0 8.0,11" fill="#a8b0be"/></svg>
<svg style="position:absolute;left:84px;top:345px;" width="22" height="15" viewBox="0 0 22 15"><path d="M0,6 L8,6 L8,2 L14,7.5 L8,13 L8,9 L0,9 Z" fill="#a8b0be"/><rect x="15" y="1" width="6" height="13" fill="#a8b0be"/></svg>
<div style="left:76px;top:370px;width:262px;height:32px;background:#384a68;"></div>
<div class="t" style="left:116.0px;top:374.4px;font-size:22px;color:#c8ced8;font-weight:400;">None</div>
<svg style="position:absolute;left:312.0px;top:380.5px;" width="16" height="11" viewBox="0 0 16 11"><polygon points="0,0 16,0 8.0,11" fill="#a8b0be"/></svg>
<svg style="position:absolute;left:86px;top:378px;" width="18" height="16" viewBox="0 0 18 16"><rect x="1" y="6" width="3" height="10" fill="#a8b0be"/><rect x="7" y="4" width="3" height="12" fill="#a8b0be"/><rect x="13" y="6" width="3" height="10" fill="#a8b0be"/><circle cx="2.5" cy="4" r="2" fill="#a8b0be"/><circle cx="8.5" cy="2" r="2" fill="#a8b0be"/><circle cx="14.5" cy="4" r="2" fill="#a8b0be"/></svg>
<div style="left:496px;top:222px;width:18px;height:242px;background:#35373b;"></div>
<div style="left:6px;top:464px;width:2868px;height:2px;background:#16171a;"></div>
<div style="left:6px;top:466px;width:20px;height:218px;background:#e9e9e9;"></div>
<div style="left:6px;top:684px;width:20px;height:24px;background:#c4c4c4;"></div>
<svg style="position:absolute;left:8px;top:689px;" width="16" height="14" viewBox="0 0 16 14"><path d="M1,12 L5,3 L10,11 L15,2" fill="none" stroke="#8a8a8a" stroke-width="1.4"/></svg>
<div style="left:26px;top:466px;width:1px;height:242px;background:#6a6a6a;"></div>
<div style="left:27px;top:466px;width:469px;height:242px;background:#999999;"></div>
<div class="t" style="left:47.0px;top:481.4px;font-size:22px;color:#e2e2e2;font-weight:700;-webkit-text-stroke:0.15px currentColor;">2</div>
<div style="left:77px;top:470px;width:188px;height:45px;border-radius:6px;background:#5a5a5a;"></div>
<div style="left:79px;top:472px;width:43px;height:41px;background:#808080;border-radius:4px 0 0 4px;"></div>
<div style="left:124px;top:472px;width:46px;height:41px;background:#808080;"></div>
<div style="left:172px;top:472px;width:46px;height:41px;background:#f05a5a;"></div>
<div style="left:220px;top:472px;width:43px;height:41px;background:#5ab4d2;border-radius:0 4px 4px 0;"></div>
<div class="t" style="left:80.5px;top:480.7px;font-size:24px;color:#e2e2e2;font-weight:400;width:40px;text-align:center;">M</div>
<div class="t" style="left:127.0px;top:480.7px;font-size:24px;color:#e2e2e2;font-weight:400;width:40px;text-align:center;">S</div>
<svg style="position:absolute;left:185px;top:483px;" width="20" height="20" viewBox="0 0 20 20"><circle cx="10" cy="10" r="9.5" fill="#ececec"/></svg>
<svg style="position:absolute;left:232px;top:481px;" width="22" height="24" viewBox="0 0 22 24"><path d="M10,2 A9,10 0 0 0 10,22 Z" fill="#ececec"/><path d="M14,4 Q19,12 14,20" fill="none" stroke="#ececec" stroke-width="1.6"/></svg>
<div class="t" style="left:278.5px;top:480.3px;font-size:25px;color:#e2e2e2;font-weight:400;">Drum Set</div>
<svg style="position:absolute;left:442px;top:484px;" width="34" height="20" viewBox="0 0 34 20"><path d="M0,0 L5.78,0 L5.78,12.0 L13.94,12.0 L13.94,0 L20.06,0 L20.06,12.0 L28.22,12.0 L28.22,0 L34,0 L34,20 L0,20 Z" fill="#d0d0d0"/></svg>
<div style="left:77px;top:525px;width:261px;height:8px;background:#3f4247;"></div>
<div style="left:77px;top:525px;width:197px;height:8px;background:#d6d6d6;"></div>
<div style="left:77px;top:525px;width:197px;height:2px;background:#ececec;"></div>
<div style="left:76px;top:546px;width:262px;height:32px;background:#7f7f7f;"></div>
<div class="t" style="left:116.0px;top:550.4px;font-size:22px;color:#ececec;font-weight:400;">Impact 4 8</div>
<svg style="position:absolute;left:312.0px;top:556.5px;" width="16" height="11" viewBox="0 0 16 11"><polygon points="0,0 16,0 8.0,11" fill="#d0d0d0"/></svg>
<svg style="position:absolute;left:84px;top:555px;" width="20" height="14" viewBox="0 0 20 14"><path d="M0,0 L3.4000000000000004,0 L3.4000000000000004,8.4 L8.2,8.4 L8.2,0 L11.799999999999999,0 L11.799999999999999,8.4 L16.599999999999998,8.4 L16.599999999999998,0 L20,0 L20,14 L0,14 Z" fill="#d0d0d0"/></svg>
<div style="left:76px;top:580px;width:262px;height:32px;background:#7f7f7f;"></div>
<div class="t" style="left:116.0px;top:584.4px;font-size:22px;color:#ececec;font-weight:400;">All Inputs</div>
<svg style="position:absolute;left:312.0px;top:590.5px;" width="16" height="11" viewBox="0 0 16 11"><polygon points="0,0 16,0 8.0,11" fill="#d0d0d0"/></svg>
<svg style="position:absolute;left:84px;top:589px;" width="22" height="15" viewBox="0 0 22 15"><path d="M0,6 L8,6 L8,2 L14,7.5 L8,13 L8,9 L0,9 Z" fill="#d0d0d0"/><rect x="15" y="1" width="6" height="13" fill="#d0d0d0"/></svg>
<div style="left:76px;top:614px;width:262px;height:32px;background:#7f7f7f;"></div>
<div class="t" style="left:116.0px;top:618.4px;font-size:22px;color:#ececec;font-weight:400;">None</div>
<svg style="position:absolute;left:312.0px;top:624.5px;" width="16" height="11" viewBox="0 0 16 11"><polygon points="0,0 16,0 8.0,11" fill="#d0d0d0"/></svg>
<svg style="position:absolute;left:86px;top:622px;" width="18" height="16" viewBox="0 0 18 16"><rect x="1" y="6" width="3" height="10" fill="#d0d0d0"/><rect x="7" y="4" width="3" height="12" fill="#d0d0d0"/><rect x="13" y="6" width="3" height="10" fill="#d0d0d0"/><circle cx="2.5" cy="4" r="2" fill="#d0d0d0"/><circle cx="8.5" cy="2" r="2" fill="#d0d0d0"/><circle cx="14.5" cy="4" r="2" fill="#d0d0d0"/></svg>
<div style="left:496px;top:466px;width:18px;height:242px;background:#474a50;"></div>
<div style="left:6px;top:708px;width:508px;height:66px;background:#2d2f33;"></div>
<div style="left:516px;top:222px;width:2326px;height:242px;background:#0562df;"></div>
<div style="left:516px;top:222px;width:2px;height:242px;background:#c8c8c8;"></div>
<svg style="position:absolute;left:518px;top:222px;" width="140" height="26" viewBox="0 0 140 26"><polygon points="0,0 138,0 124,26 0,26" fill="#0a2358"/></svg>
<div class="t" style="left:523.5px;top:225.1px;font-size:18.5px;color:#f4f6f8;font-weight:400;letter-spacing:1.6px;-webkit-text-stroke:0.2px currentColor;">Saxophone</div>
<div style="left:518px;top:297px;width:2324px;height:2px;background:#5a6478;"></div>
<div style="left:518px;top:452px;width:2324px;height:2px;background:#4a5a80;"></div>
<div style="left:1016px;top:356px;width:86px;height:2px;background:#d0d6e0;"></div>
<div style="left:1102px;top:342px;width:166px;height:2px;background:#d0d6e0;"></div>
<div style="left:1268px;top:338px;width:168px;height:2px;background:#d0d6e0;"></div>
<div style="left:1436px;top:342px;width:126px;height:2px;background:#d0d6e0;"></div>
<div style="left:1562px;top:346px;width:292px;height:2px;background:#d0d6e0;"></div>
<div style="left:1854px;top:342px;width:126px;height:2px;background:#d0d6e0;"></div>
<div style="left:1980px;top:346px;width:40px;height:2px;background:#d0d6e0;"></div>
<div style="left:2020px;top:342px;width:44px;height:2px;background:#d0d6e0;"></div>
<div style="left:2064px;top:346px;width:40px;height:2px;background:#d0d6e0;"></div>
<div style="left:2104px;top:342px;width:44px;height:2px;background:#d0d6e0;"></div>
<div style="left:2148px;top:346px;width:40px;height:2px;background:#d0d6e0;"></div>
<div style="left:2188px;top:342px;width:42px;height:2px;background:#d0d6e0;"></div>
<div style="left:2230px;top:346px;width:84px;height:2px;background:#d0d6e0;"></div>
<div style="left:2314px;top:342px;width:124px;height:2px;background:#d0d6e0;"></div>
<div style="left:2438px;top:338px;width:86px;height:2px;background:#d0d6e0;"></div>
<div style="left:2524px;top:342px;width:84px;height:2px;background:#d0d6e0;"></div>
<div style="left:2608px;top:340px;width:82px;height:2px;background:#d0d6e0;"></div>
<div style="left:2690px;top:346px;width:152px;height:2px;background:#d0d6e0;"></div>
<div style="left:2842px;top:222px;width:32px;height:486px;background:#2a2c30;"></div>
<svg style="position:absolute;left:2850px;top:232px;" width="16" height="10" viewBox="0 0 16 10"><polygon points="0,10 8,0 16,10" fill="#707378"/></svg>
<div style="left:2854px;top:257px;width:8px;height:450px;background:#5a5d62;"></div>
<div style="left:516px;top:466px;width:2326px;height:240px;background:#e6e6e6;"></div>
<svg style="position:absolute;left:516px;top:466px;" width="122" height="25" viewBox="0 0 122 25"><polygon points="0,0 121,0 108,25 0,25" fill="#545456"/></svg>
<div class="t" style="left:523.0px;top:469.5px;font-size:18.5px;color:#f2f2f2;font-weight:400;letter-spacing:1.5px;-webkit-text-stroke:0.2px currentColor;">Drum Set</div>
<div style="left:518px;top:542px;width:2324px;height:2px;background:#3c3c3c;"></div>
<div style="left:518px;top:628px;width:2324px;height:2px;background:#3c3c3c;"></div>
<div style="left:516px;top:491px;width:2px;height:217px;background:#c4c4c4;"></div>
<div style="left:518px;top:640px;width:168px;height:2px;background:#3c3c3c;"></div>
<div style="left:686px;top:636px;width:168px;height:2px;background:#3c3c3c;"></div>
<div style="left:854px;top:640px;width:168px;height:2px;background:#3c3c3c;"></div>
<div style="left:1022px;top:636px;width:168px;height:2px;background:#3c3c3c;"></div>
<div style="left:1190px;top:640px;width:168px;height:2px;background:#3c3c3c;"></div>
<div style="left:1358px;top:636px;width:168px;height:2px;background:#3c3c3c;"></div>
<div style="left:1526px;top:640px;width:168px;height:2px;background:#3c3c3c;"></div>
<div style="left:1694px;top:636px;width:168px;height:2px;background:#3c3c3c;"></div>
<div style="left:1862px;top:640px;width:168px;height:2px;background:#3c3c3c;"></div>
<div style="left:2030px;top:636px;width:168px;height:2px;background:#3c3c3c;"></div>
<div style="left:2198px;top:640px;width:168px;height:2px;background:#3c3c3c;"></div>
<div style="left:2366px;top:636px;width:168px;height:2px;background:#3c3c3c;"></div>
<div style="left:2534px;top:640px;width:168px;height:2px;background:#3c3c3c;"></div>
<div style="left:2702px;top:636px;width:140px;height:2px;background:#3c3c3c;"></div>
<div style="left:516px;top:708px;width:2358px;height:66px;background:#1d1e21;"></div>
<div style="left:559px;top:708px;width:2px;height:66px;background:#303236;"></div>
<div style="left:601px;top:708px;width:2px;height:66px;background:#303236;"></div>
<div style="left:642px;top:708px;width:2px;height:66px;background:#303236;"></div>
<div style="left:684px;top:708px;width:2px;height:66px;background:#3a3c40;"></div>
<div style="left:726px;top:708px;width:2px;height:66px;background:#303236;"></div>
<div style="left:768px;top:708px;width:2px;height:66px;background:#303236;"></div>
<div style="left:810px;top:708px;width:2px;height:66px;background:#303236;"></div>
<div style="left:851px;top:708px;width:2px;height:66px;background:#3a3c40;"></div>
<div style="left:893px;top:708px;width:2px;height:66px;background:#303236;"></div>
<div style="left:935px;top:708px;width:2px;height:66px;background:#303236;"></div>
<div style="left:977px;top:708px;width:2px;height:66px;background:#303236;"></div>
<div style="left:1019px;top:708px;width:2px;height:66px;background:#3a3c40;"></div>
<div style="left:1061px;top:708px;width:2px;height:66px;background:#303236;"></div>
<div style="left:1102px;top:708px;width:2px;height:66px;background:#303236;"></div>
<div style="left:1144px;top:708px;width:2px;height:66px;background:#303236;"></div>
<div style="left:1186px;top:708px;width:2px;height:66px;background:#45474b;"></div>
<div style="left:1228px;top:708px;width:2px;height:66px;background:#303236;"></div>
<div style="left:1270px;top:708px;width:2px;height:66px;background:#303236;"></div>
<div style="left:1311px;top:708px;width:2px;height:66px;background:#303236;"></div>
<div style="left:1353px;top:708px;width:2px;height:66px;background:#3a3c40;"></div>
<div style="left:1395px;top:708px;width:2px;height:66px;background:#303236;"></div>
<div style="left:1437px;top:708px;width:2px;height:66px;background:#303236;"></div>
<div style="left:1479px;top:708px;width:2px;height:66px;background:#303236;"></div>
<div style="left:1521px;top:708px;width:2px;height:66px;background:#3a3c40;"></div>
<div style="left:1562px;top:708px;width:2px;height:66px;background:#303236;"></div>
<div style="left:1604px;top:708px;width:2px;height:66px;background:#303236;"></div>
<div style="left:1646px;top:708px;width:2px;height:66px;background:#303236;"></div>
<div style="left:1688px;top:708px;width:2px;height:66px;background:#3a3c40;"></div>
<div style="left:1730px;top:708px;width:2px;height:66px;background:#303236;"></div>
<div style="left:1771px;top:708px;width:2px;height:66px;background:#303236;"></div>
<div style="left:1813px;top:708px;width:2px;height:66px;background:#303236;"></div>
<div style="left:1855px;top:708px;width:2px;height:66px;background:#45474b;"></div>
<div style="left:1897px;top:708px;width:2px;height:66px;background:#303236;"></div>
<div style="left:1939px;top:708px;width:2px;height:66px;background:#303236;"></div>
<div style="left:1980px;top:708px;width:2px;height:66px;background:#303236;"></div>
<div style="left:2022px;top:708px;width:2px;height:66px;background:#3a3c40;"></div>
<div style="left:2064px;top:708px;width:2px;height:66px;background:#303236;"></div>
<div style="left:2106px;top:708px;width:2px;height:66px;background:#303236;"></div>
<div style="left:2148px;top:708px;width:2px;height:66px;background:#303236;"></div>
<div style="left:2189px;top:708px;width:2px;height:66px;background:#3a3c40;"></div>
<div style="left:2231px;top:708px;width:2px;height:66px;background:#303236;"></div>
<div style="left:2273px;top:708px;width:2px;height:66px;background:#303236;"></div>
<div style="left:2315px;top:708px;width:2px;height:66px;background:#303236;"></div>
<div style="left:2357px;top:708px;width:2px;height:66px;background:#3a3c40;"></div>
<div style="left:2399px;top:708px;width:2px;height:66px;background:#303236;"></div>
<div style="left:2440px;top:708px;width:2px;height:66px;background:#303236;"></div>
<div style="left:2482px;top:708px;width:2px;height:66px;background:#303236;"></div>
<div style="left:2524px;top:708px;width:2px;height:66px;background:#45474b;"></div>
<div style="left:2566px;top:708px;width:2px;height:66px;background:#303236;"></div>
<div style="left:2608px;top:708px;width:2px;height:66px;background:#303236;"></div>
<div style="left:2649px;top:708px;width:2px;height:66px;background:#303236;"></div>
<div style="left:2691px;top:708px;width:2px;height:66px;background:#3a3c40;"></div>
<div style="left:2733px;top:708px;width:2px;height:66px;background:#303236;"></div>
<div style="left:2775px;top:708px;width:2px;height:66px;background:#303236;"></div>
<div style="left:2817px;top:708px;width:2px;height:66px;background:#303236;"></div>
<div style="left:516px;top:708px;width:2px;height:66px;background:#c8c8c8;"></div>
<div style="left:6px;top:774px;width:2868px;height:33px;background:#222427;"></div>
<div style="left:6px;top:774px;width:289px;height:33px;background:#2a2c30;"></div>
<div style="left:6px;top:773px;width:2868px;height:1px;background:#1a1b1d;"></div>
<div class="t" style="left:46.0px;top:783.9px;font-size:19px;color:#b4b7ba;font-weight:400;">M</div>
<div class="t" style="left:145.0px;top:783.9px;font-size:19px;color:#b4b7ba;font-weight:400;">S</div>
<div style="left:102px;top:776px;width:1px;height:31px;background:#34363a;"></div>
<div style="left:200px;top:776px;width:1px;height:31px;background:#34363a;"></div>
<div class="t" style="left:333.0px;top:783.1px;font-size:20px;color:#b4b7ba;font-weight:400;">Medium</div>
<svg style="position:absolute;left:444.0px;top:786.0px;" width="16" height="10" viewBox="0 0 16 10"><polygon points="0,0 16,0 8.0,10" fill="#8a8d91"/></svg>
<svg style="position:absolute;left:486px;top:781px;" width="16" height="18" viewBox="0 0 16 18"><rect x="0" y="0" width="16" height="3" fill="#6a6d72"/><rect x="0" y="6" width="16" height="3" fill="#6a6d72"/><rect x="0" y="12" width="16" height="4" fill="#6a6d72"/></svg>
<svg style="position:absolute;left:530px;top:783px;" width="13" height="16" viewBox="0 0 13 16"><polygon points="12,0 0,8 12,16" fill="#6a6d72"/></svg>
<div style="left:566px;top:786px;width:44px;height:10px;background:#6a6d72;"></div>
<div style="left:2874px;top:96px;width:6px;height:711px;background:#0f1011;"></div>
<div style="left:2877px;top:96px;width:3px;height:711px;background:#2b2d2f;"></div>
<div style="left:0px;top:807px;width:2880px;height:4px;background:#0f1011;"></div>
<div style="left:0px;top:811px;width:2880px;height:9px;background:#222427;"></div>
<div style="left:0px;top:820px;width:6px;height:795px;background:#0f1011;"></div>
<div style="left:0px;top:820px;width:2px;height:795px;background:#2b2d2f;"></div>
<div style="left:2874px;top:820px;width:6px;height:795px;background:#0f1011;"></div>
<div style="left:2877px;top:820px;width:3px;height:795px;background:#2b2d2f;"></div>
<div style="left:6px;top:820px;width:2868px;height:71px;background:#5d6168;"></div>
<div style="left:6px;top:820px;width:64px;height:71px;background:#62666d;"></div>
<div style="left:150px;top:820px;width:64px;height:71px;background:#3792d6;"></div>
<div style="left:150px;top:885px;width:64px;height:6px;background:#2f5673;"></div>
<div style="left:6px;top:885px;width:2868px;height:6px;background:#45484e;"></div>
<div style="left:150px;top:885px;width:64px;height:6px;background:#2f5673;"></div>
<div style="left:6px;top:891px;width:2868px;height:3px;background:#0f1011;"></div>
<svg style="position:absolute;left:20px;top:841px;" width="36" height="30" viewBox="0 0 36 30"><rect x="1" y="1.0" width="33" height="5" fill="#f4f4f4" stroke="#15171a" stroke-width="1.3"/><rect x="1" y="7.5" width="33" height="5" fill="#f4f4f4" stroke="#15171a" stroke-width="1.3"/><rect x="1" y="14.0" width="33" height="5" fill="#f4f4f4" stroke="#15171a" stroke-width="1.3"/><rect x="1" y="20.5" width="33" height="5" fill="#f4f4f4" stroke="#15171a" stroke-width="1.3"/></svg>
<svg style="position:absolute;left:169px;top:837px;" width="28" height="38" viewBox="0 0 28 38"><path d="M3,2 L3,27 L9,21 L14,32 L19,30 L14,19 L22,19 Z" fill="#f4f4f4" stroke="#15171a" stroke-width="2.2" stroke-linejoin="round"/></svg>
<svg style="position:absolute;left:224px;top:837px;" width="42" height="40" viewBox="0 0 42 40"><path d="M3,36 L16,20 L28,4 L36,9 L24,26 Z M16,20 L24,26" fill="#f4f4f4" stroke="#15171a" stroke-width="2.4" stroke-linejoin="round"/></svg>
<svg style="position:absolute;left:288px;top:838px;" width="42" height="40" viewBox="0 0 42 40"><path d="M4,36 L6,28 L30,4 Q34,1 37,5 Q39,9 36,12 L12,35 Z M6,28 L12,35" fill="#f4f4f4" stroke="#15171a" stroke-width="2.4" stroke-linejoin="round"/></svg>
<svg style="position:absolute;left:324px;top:868px;" width="14" height="12" viewBox="0 0 14 12"><polygon points="13,0 13,12 0,12" fill="#8a8d92"/></svg>
<svg style="position:absolute;left:353px;top:836px;" width="42" height="42" viewBox="0 0 42 42"><path d="M2,26 L20,6 L37,11 L38,20 L19,40 L4,36 Z" fill="#f4f4f4" stroke="#15171a" stroke-width="2.6" stroke-linejoin="round"/><path d="M4,27 L18,30 L38,12 M18,30 L19,40" fill="none" stroke="#15171a" stroke-width="2.2"/></svg>
<svg style="position:absolute;left:416px;top:836px;" width="42" height="42" viewBox="0 0 42 42"><path d="M3,14 L11,14 L22,4 L22,38 L11,28 L3,28 Z" fill="#f4f4f4" stroke="#15171a" stroke-width="2.4" stroke-linejoin="round"/><path d="M4,4 L36,38" stroke="#15171a" stroke-width="6" stroke-linecap="round"/><path d="M4,4 L36,38" stroke="#f4f4f4" stroke-width="2.5" stroke-linecap="round"/></svg>
<svg style="position:absolute;left:480px;top:836px;" width="44" height="42" viewBox="0 0 44 42"><path d="M3,14 L11,14 L22,4 L22,38 L11,28 L3,28 Z" fill="#f4f4f4" stroke="#15171a" stroke-width="2.4" stroke-linejoin="round"/><path d="M28,14 Q32,21 28,28 M33,9 Q40,21 33,33" fill="none" stroke="#15171a" stroke-width="5" stroke-linecap="round"/><path d="M28,14 Q32,21 28,28 M33,9 Q40,21 33,33" fill="none" stroke="#f4f4f4" stroke-width="2" stroke-linecap="round"/></svg>
<div style="left:575px;top:820px;width:1px;height:71px;background:#45484d;"></div>
<svg style="position:absolute;left:618px;top:843px;" width="56" height="26" viewBox="0 0 56 26"><rect x="2" y="3" width="17" height="7" fill="#f4f4f4" stroke="#15171a" stroke-width="1.6"/><rect x="19" y="9" width="10" height="7" fill="#f4f4f4" stroke="#15171a" stroke-width="1.6"/><rect x="27" y="16" width="14" height="7" fill="#f4f4f4" stroke="#15171a" stroke-width="1.6"/><rect x="39" y="9" width="8" height="7" fill="#f4f4f4" stroke="#15171a" stroke-width="1.6"/><rect x="45" y="3" width="10" height="7" fill="#f4f4f4" stroke="#15171a" stroke-width="1.6"/></svg>
<svg style="position:absolute;left:691px;top:838px;" width="38" height="42" viewBox="0 0 38 42"><circle cx="17" cy="19" r="13" fill="none" stroke="#15171a" stroke-width="7"/><circle cx="17" cy="19" r="13" fill="none" stroke="#f4f4f4" stroke-width="3.5"/><path d="M20,24 L31,34" stroke="#15171a" stroke-width="7"/><path d="M20,24 L31,34" stroke="#f4f4f4" stroke-width="3.5"/></svg>
<svg style="position:absolute;left:750px;top:831px;" width="54" height="52" viewBox="0 0 54 52"><path d="M17,4 L33,4 L37,9 L37,22 L17,22 Z" fill="#f4f4f4" stroke="#15171a" stroke-width="2"/><rect x="21" y="9" width="4" height="9" fill="#15171a"/><rect x="27" y="13" width="4" height="5" fill="#15171a"/><path d="M3,34 L14,25 L40,25 L51,34 L46,38 L38,31 L16,31 L8,38 Z" fill="#f4f4f4" stroke="#15171a" stroke-width="2"/><path d="M15,35 L39,35 L33,50 L21,50 Z" fill="#f4f4f4" stroke="#15171a" stroke-width="2"/></svg>
<div style="left:819px;top:820px;width:1px;height:71px;background:#4a4d52;"></div>
<div style="left:820px;top:820px;width:174px;height:65px;background:#62666d;"></div>
<div class="t" style="left:845.0px;top:842.8px;font-size:25px;color:#c4c6c9;font-weight:400;">Action</div>
<svg style="position:absolute;left:936.0px;top:847.0px;" width="20" height="12" viewBox="0 0 20 12"><polygon points="0,0 20,0 10.0,12" fill="#c4c6c9"/></svg>
<div style="left:994px;top:820px;width:432px;height:65px;background:#4c4f55;"></div>
<div class="t" style="left:1013.0px;top:825.5px;font-size:21.5px;color:#c9cbce;font-weight:400;">Note Color</div>
<div style="left:1002px;top:853px;width:166px;height:32px;background:#5e6269;"></div>
<div class="t" style="left:1010.0px;top:857.9px;font-size:23px;color:#e4e5e6;font-weight:400;">Part</div>
<svg style="position:absolute;left:1142.0px;top:863.5px;" width="16" height="11" viewBox="0 0 16 11"><polygon points="0,0 16,0 8.0,11" fill="#a9abae"/></svg>
<div class="t" style="left:1192.0px;top:845.4px;font-size:22px;color:#f4f4f4;font-weight:400;text-shadow:0 0 2px #000,0 0 1px #000;letter-spacing:-1px;">AQ</div>
<div class="t" style="left:1260.0px;top:825.5px;font-size:21.5px;color:#c9cbce;font-weight:400;">Quantize</div>
<div style="left:1248px;top:853px;width:166px;height:32px;background:#5e6269;"></div>
<div class="t" style="left:1256.0px;top:857.9px;font-size:23px;color:#e4e5e6;font-weight:400;">1/16</div>
<svg style="position:absolute;left:1388.0px;top:863.5px;" width="16" height="11" viewBox="0 0 16 11"><polygon points="0,0 16,0 8.0,11" fill="#a9abae"/></svg>
<div style="left:1418px;top:853px;width:8px;height:32px;background:#5e6269;"></div>
<div style="left:6px;top:894px;width:2868px;height:62px;background:#2a2c30;"></div>
<div style="left:6px;top:894px;width:26px;height:59px;background:#e8e8e8;"></div>
<div style="left:32px;top:894px;width:354px;height:59px;background:#50545b;"></div>
<div class="t" style="left:151.0px;top:911.6px;font-size:24.4px;color:#d2d4d7;font-weight:400;">Drum Set</div>
<svg style="position:absolute;left:359.0px;top:919.5px;" width="18" height="11" viewBox="0 0 18 11"><polygon points="0,0 18,0 9.0,11" fill="#a9abae"/></svg>
<div style="left:386px;top:894px;width:64px;height:59px;background:#3a3d42;"></div>
<div style="left:451px;top:894px;width:64px;height:59px;background:#3a3d42;"></div>
<div style="left:450px;top:894px;width:1px;height:59px;background:#2a2c30;"></div>
<svg style="position:absolute;left:410px;top:914px;" width="18" height="22" viewBox="0 0 18 22"><rect x="6" y="1" width="11" height="4" fill="#7e8186"/><rect x="6" y="7" width="11" height="3" fill="#7e8186"/><rect x="6" y="12" width="11" height="3" fill="#7e8186"/><rect x="1" y="17" width="16" height="4" fill="#7e8186"/><rect x="13" y="1" width="4" height="20" fill="#7e8186"/></svg>
<svg style="position:absolute;left:468px;top:909px;" width="32" height="32" viewBox="0 0 32 32"><ellipse cx="15" cy="20" rx="13" ry="5" fill="none" stroke="#e8e8e8" stroke-width="3"/><path d="M2,20 L2,27 Q15,33 28,27 L28,20" fill="#e8e8e8"/><path d="M4,2 L15,13 M27,4 L16,13" stroke="#e8e8e8" stroke-width="3"/></svg>
<div style="left:527px;top:906px;width:238px;height:38px;background:#0f1011;"></div>
<div style="left:529px;top:908px;width:234px;height:34px;background:#121315;"></div>
<svg style="position:absolute;left:537px;top:914px;" width="18" height="22" viewBox="0 0 18 22"><path d="M1,1 L12,1 L17,6 L17,21 L1,21 Z" fill="none" stroke="#8e9196" stroke-width="2"/><path d="M4,9 L14,9 M4,13 L14,13 M4,17 L14,17" stroke="#8e9196" stroke-width="2"/></svg>
<div class="t" style="left:598.0px;top:912.5px;font-size:23px;color:#d6d8da;font-weight:400;">Impact 4 8</div>
<svg style="position:absolute;left:739.0px;top:920.5px;" width="18" height="11" viewBox="0 0 18 11"><polygon points="0,0 18,0 9.0,11" fill="#8e9196"/></svg>
<svg style="position:absolute;left:790px;top:913px;" width="24" height="24" viewBox="0 0 24 24"><path d="M4,8 Q1,2 7,1 L10,1 L7,5 L9,8 L12,6 L14,4 Q16,9 12,11 L22,20 Q23,22 21,23 L10,13 Q6,13 4,8 Z" fill="#7e8186"/></svg>
<div style="left:6px;top:953px;width:380px;height:655px;background:#25272b;"></div>
<div style="left:386px;top:953px;width:3px;height:619px;background:#131416;"></div>
<div style="left:293px;top:955px;width:47px;height:45px;background:#303236;"></div>
<div style="left:342px;top:955px;width:44px;height:45px;background:#303236;"></div>
<svg style="position:absolute;left:18px;top:970px;" width="20" height="15" viewBox="0 0 20 15"><path d="M0,0 L3,0 L3,8 L6,8 L6,0 L9,0 L9,8 L12,8 L12,0 L15,0 L15,8 L18,0 L20,0 L20,15 L0,15 Z" fill="#8e9196"/></svg>
<div class="t" style="left:58.0px;top:966.0px;font-size:22.8px;color:#c4c6c9;font-weight:400;">Instrument</div>
<div class="t" style="left:297.0px;top:966.5px;font-size:23px;color:#8e9196;font-weight:400;width:40px;text-align:center;">M</div>
<div class="t" style="left:344.0px;top:966.5px;font-size:23px;color:#8e9196;font-weight:400;width:40px;text-align:center;">S</div>
<div class="t" style="left:18.0px;top:1011.5px;font-size:22.8px;color:#c4c6c9;font-weight:400;">Audition Notes</div>
<div style="left:342px;top:1001px;width:44px;height:45px;background:#303236;"></div>
<div style="left:348px;top:1008px;width:32px;height:32px;background:#4a4d52;"></div>
<div style="left:350px;top:1010px;width:28px;height:28px;background:#2a2c30;"></div>
<svg style="position:absolute;left:350px;top:1012px;" width="28" height="24" viewBox="0 0 28 24"><path d="M5,12 L11,19 L23,4" fill="none" stroke="#f0f0f0" stroke-width="3.5"/></svg>
<div class="t" style="left:18.0px;top:1057.3px;font-size:22.8px;color:#c4c6c9;font-weight:400;">Default Velocity</div>
<div style="left:293px;top:1048px;width:93px;height:43px;background:#35373b;"></div>
<div class="t" style="left:297.0px;top:1058.4px;font-size:22px;color:#c4c6c9;font-weight:400;width:60px;text-align:right;">127</div>
<div class="t" style="left:18.0px;top:1103.7px;font-size:22.8px;color:#c4c6c9;font-weight:400;">Length</div>
<div style="left:342px;top:1094px;width:44px;height:44px;background:#2a83c7;"></div>
<svg style="position:absolute;left:352px;top:1103px;" width="26" height="26" viewBox="0 0 26 26"><circle cx="11" cy="11" r="8" fill="none" stroke="#15171a" stroke-width="6"/><circle cx="11" cy="11" r="8" fill="none" stroke="#f4f4f4" stroke-width="2.6"/><path d="M13,14 L20,20" stroke="#15171a" stroke-width="6"/><path d="M13,14 L20,20" stroke="#f4f4f4" stroke-width="2.6"/></svg>
<div style="left:6px;top:1140px;width:99px;height:44px;background:#303236;"></div>
<div style="left:108px;top:1140px;width:232px;height:44px;background:#303236;"></div>
<div style="left:342px;top:1140px;width:44px;height:44px;background:#303236;"></div>
<div class="t" style="left:21.0px;top:1149.2px;font-size:23px;color:#c4c6c9;font-weight:400;">1/16</div>
<svg style="position:absolute;left:80.0px;top:1158.0px;" width="16" height="10" viewBox="0 0 16 10"><polygon points="0,0 16,0 8.0,10" fill="#8e9196"/></svg>
<div class="t" style="left:171.0px;top:1149.4px;font-size:22.8px;color:#c4c6c9;font-weight:400;">Straight</div>
<svg style="position:absolute;left:314.0px;top:1158.0px;" width="16" height="10" viewBox="0 0 16 10"><polygon points="0,0 16,0 8.0,10" fill="#8e9196"/></svg>
<svg style="position:absolute;left:360px;top:1157px;" width="8" height="8" viewBox="0 0 8 8"><circle cx="4" cy="4" r="3.2" fill="#c4c6c9"/></svg>
<div class="t" style="left:18.0px;top:1220.7px;font-size:22.8px;color:#c4c6c9;font-weight:400;">No event selected</div>
<div style="left:389px;top:953px;width:445px;height:619px;background:#0d0e0f;"></div>
<div style="left:389px;top:960px;width:445px;height:44px;background:#46494f;"></div>
<div style="left:390px;top:962px;width:12px;height:39px;background:#e21f55;"></div>
<div class="t" style="left:420.0px;top:969.5px;font-size:24px;color:#e8e8e8;font-weight:400;">Kick 1</div>
<div class="t" style="left:680.8px;top:969.5px;font-size:24px;color:#e8e8e8;font-weight:400;">C 1</div>
<div style="left:389px;top:1006px;width:445px;height:47px;background:#2b2d31;"></div>
<div style="left:390px;top:1010px;width:12px;height:41px;background:#4a94ec;"></div>
<div class="t" style="left:420.0px;top:1018.4px;font-size:24px;color:#c8cacc;font-weight:400;">Rim</div>
<div class="t" style="left:680.8px;top:1018.4px;font-size:24px;color:#c8cacc;font-weight:400;">C# 1</div>
<div style="left:389px;top:1055px;width:445px;height:47px;background:#2b2d31;"></div>
<div style="left:390px;top:1059px;width:12px;height:41px;background:#f15523;"></div>
<div class="t" style="left:420.0px;top:1067.4px;font-size:24px;color:#c8cacc;font-weight:400;">Snare 1</div>
<div class="t" style="left:680.8px;top:1067.4px;font-size:24px;color:#c8cacc;font-weight:400;">D 1</div>
<div style="left:389px;top:1104px;width:445px;height:47px;background:#2b2d31;"></div>
<div style="left:390px;top:1108px;width:12px;height:41px;background:#f15523;"></div>
<div class="t" style="left:420.0px;top:1116.5px;font-size:24px;color:#c8cacc;font-weight:400;">Clap</div>
<div class="t" style="left:680.8px;top:1116.5px;font-size:24px;color:#c8cacc;font-weight:400;">D# 1</div>
<div style="left:389px;top:1153px;width:445px;height:47px;background:#2b2d31;"></div>
<div style="left:390px;top:1157px;width:12px;height:41px;background:#e21f55;"></div>
<div class="t" style="left:420.0px;top:1165.5px;font-size:24px;color:#c8cacc;font-weight:400;">Kick 2</div>
<div class="t" style="left:680.8px;top:1165.5px;font-size:24px;color:#c8cacc;font-weight:400;">E 1</div>
<div style="left:389px;top:1202px;width:445px;height:47px;background:#2b2d31;"></div>
<div style="left:390px;top:1206px;width:12px;height:41px;background:#4a94ec;"></div>
<div class="t" style="left:420.0px;top:1214.5px;font-size:24px;color:#c8cacc;font-weight:400;">Perc 1</div>
<div class="t" style="left:680.8px;top:1214.5px;font-size:24px;color:#c8cacc;font-weight:400;">F 1</div>
<div style="left:389px;top:1251px;width:445px;height:47px;background:#2b2d31;"></div>
<div style="left:390px;top:1255px;width:12px;height:41px;background:#8255c4;"></div>
<div class="t" style="left:420.0px;top:1263.5px;font-size:24px;color:#c8cacc;font-weight:400;">Hat 1</div>
<div class="t" style="left:680.8px;top:1263.5px;font-size:24px;color:#c8cacc;font-weight:400;">F# 1</div>
<div style="left:389px;top:1300px;width:445px;height:47px;background:#2b2d31;"></div>
<div style="left:390px;top:1304px;width:12px;height:41px;background:#6b3cb6;"></div>
<div class="t" style="left:420.0px;top:1312.6px;font-size:24px;color:#c8cacc;font-weight:400;">Hat 2</div>
<div class="t" style="left:680.8px;top:1312.6px;font-size:24px;color:#c8cacc;font-weight:400;">G 1</div>
<div style="left:389px;top:1349px;width:445px;height:47px;background:#2b2d31;"></div>
<div style="left:390px;top:1353px;width:12px;height:41px;background:#4a94ec;"></div>
<div class="t" style="left:420.0px;top:1361.6px;font-size:24px;color:#c8cacc;font-weight:400;">Perc 2</div>
<div class="t" style="left:680.8px;top:1361.6px;font-size:24px;color:#c8cacc;font-weight:400;">G# 1</div>
<div style="left:389px;top:1398px;width:445px;height:47px;background:#2b2d31;"></div>
<div style="left:390px;top:1402px;width:12px;height:41px;background:#4a94ec;"></div>
<div class="t" style="left:420.0px;top:1410.6px;font-size:24px;color:#c8cacc;font-weight:400;">Perc 3</div>
<div class="t" style="left:680.8px;top:1410.6px;font-size:24px;color:#c8cacc;font-weight:400;">A 1</div>
<div style="left:389px;top:1447px;width:445px;height:47px;background:#2b2d31;"></div>
<div style="left:390px;top:1451px;width:12px;height:41px;background:#4db354;"></div>
<div class="t" style="left:420.0px;top:1459.7px;font-size:24px;color:#c8cacc;font-weight:400;">Hat 3</div>
<div class="t" style="left:680.8px;top:1459.7px;font-size:24px;color:#c8cacc;font-weight:400;">A# 1</div>
<div style="left:389px;top:1496px;width:445px;height:47px;background:#2b2d31;"></div>
<div style="left:390px;top:1500px;width:12px;height:42px;background:#4db354;"></div>
<div class="t" style="left:420.0px;top:1508.7px;font-size:24px;color:#c8cacc;font-weight:400;">Crash</div>
<div class="t" style="left:680.8px;top:1508.7px;font-size:24px;color:#c8cacc;font-weight:400;">B 1</div>
<div style="left:389px;top:1545px;width:445px;height:27px;background:#2b2d31;"></div>
<div style="left:390px;top:1549px;width:12px;height:23px;background:#4a94ec;"></div>
<div class="t" style="left:420.0px;top:1557.7px;font-size:24px;color:#c8cacc;font-weight:400;">Perc 4</div>
<div class="t" style="left:680.8px;top:1557.7px;font-size:24px;color:#c8cacc;font-weight:400;">C 2</div>
<div style="left:834px;top:953px;width:2px;height:619px;background:#0b0c0d;"></div>
<div style="left:389px;top:1572px;width:448px;height:3px;background:#131416;"></div>
<div style="left:837px;top:894px;width:2037px;height:12px;background:#6b6f77;"></div>
<div style="left:836px;top:906px;width:2038px;height:49px;background:#393c43;"></div>
<div style="left:836px;top:955px;width:2038px;height:5px;background:#0d0e0f;"></div>
<div style="left:836px;top:894px;width:1px;height:61px;background:#0d0e0f;"></div>
<div style="left:875px;top:951px;width:2px;height:4px;background:#c9cacc;"></div>
<div style="left:925px;top:951px;width:2px;height:4px;background:#c9cacc;"></div>
<div style="left:974px;top:947px;width:2px;height:8px;background:#d8d9da;"></div>
<div style="left:1023px;top:951px;width:2px;height:4px;background:#c9cacc;"></div>
<div style="left:1073px;top:951px;width:2px;height:4px;background:#c9cacc;"></div>
<div style="left:1123px;top:951px;width:2px;height:4px;background:#c9cacc;"></div>
<div style="left:1172px;top:947px;width:2px;height:8px;background:#d8d9da;"></div>
<div style="left:1221px;top:951px;width:2px;height:4px;background:#c9cacc;"></div>
<div style="left:1271px;top:951px;width:2px;height:4px;background:#c9cacc;"></div>
<div style="left:1321px;top:951px;width:2px;height:4px;background:#c9cacc;"></div>
<div style="left:1370px;top:947px;width:2px;height:8px;background:#d8d9da;"></div>
<div style="left:1419px;top:951px;width:2px;height:4px;background:#c9cacc;"></div>
<div style="left:1469px;top:951px;width:2px;height:4px;background:#c9cacc;"></div>
<div style="left:1519px;top:951px;width:2px;height:4px;background:#c9cacc;"></div>
<div style="left:1568px;top:947px;width:2px;height:8px;background:#d8d9da;"></div>
<div style="left:1617px;top:951px;width:2px;height:4px;background:#c9cacc;"></div>
<div style="left:1667px;top:951px;width:2px;height:4px;background:#c9cacc;"></div>
<div style="left:1717px;top:951px;width:2px;height:4px;background:#c9cacc;"></div>
<div style="left:1766px;top:947px;width:2px;height:8px;background:#d8d9da;"></div>
<div style="left:1815px;top:951px;width:2px;height:4px;background:#c9cacc;"></div>
<div style="left:1865px;top:951px;width:2px;height:4px;background:#c9cacc;"></div>
<div style="left:1915px;top:951px;width:2px;height:4px;background:#c9cacc;"></div>
<div style="left:1964px;top:947px;width:2px;height:8px;background:#d8d9da;"></div>
<div style="left:2013px;top:951px;width:2px;height:4px;background:#c9cacc;"></div>
<div style="left:2063px;top:951px;width:2px;height:4px;background:#c9cacc;"></div>
<div style="left:2113px;top:951px;width:2px;height:4px;background:#c9cacc;"></div>
<div style="left:2162px;top:947px;width:2px;height:8px;background:#d8d9da;"></div>
<div style="left:2211px;top:951px;width:2px;height:4px;background:#c9cacc;"></div>
<div style="left:2261px;top:951px;width:2px;height:4px;background:#c9cacc;"></div>
<div style="left:2311px;top:951px;width:2px;height:4px;background:#c9cacc;"></div>
<div style="left:2360px;top:947px;width:2px;height:8px;background:#d8d9da;"></div>
<div style="left:2409px;top:951px;width:2px;height:4px;background:#c9cacc;"></div>
<div style="left:2459px;top:951px;width:2px;height:4px;background:#c9cacc;"></div>
<div style="left:2509px;top:951px;width:2px;height:4px;background:#c9cacc;"></div>
<div style="left:2558px;top:947px;width:2px;height:8px;background:#d8d9da;"></div>
<div style="left:2607px;top:951px;width:2px;height:4px;background:#c9cacc;"></div>
<div style="left:2657px;top:951px;width:2px;height:4px;background:#c9cacc;"></div>
<div style="left:2707px;top:951px;width:2px;height:4px;background:#c9cacc;"></div>
<div style="left:2756px;top:947px;width:2px;height:8px;background:#d8d9da;"></div>
<div style="left:2805px;top:951px;width:2px;height:4px;background:#c9cacc;"></div>
<div style="left:2855px;top:951px;width:2px;height:4px;background:#c9cacc;"></div>
<div class="t" style="left:979.0px;top:911.7px;font-size:20px;color:#b9bbbe;font-weight:400;">1.2</div>
<div class="t" style="left:1177.0px;top:911.7px;font-size:20px;color:#b9bbbe;font-weight:400;">1.3</div>
<div class="t" style="left:1375.0px;top:911.7px;font-size:20px;color:#b9bbbe;font-weight:400;">1.4</div>
<div class="t" style="left:1573.0px;top:911.7px;font-size:20px;color:#e4e5e6;font-weight:400;">2</div>
<div class="t" style="left:1771.0px;top:911.7px;font-size:20px;color:#b9bbbe;font-weight:400;">2.2</div>
<div class="t" style="left:1969.0px;top:911.7px;font-size:20px;color:#b9bbbe;font-weight:400;">2.3</div>
<div class="t" style="left:2167.0px;top:911.7px;font-size:20px;color:#b9bbbe;font-weight:400;">2.4</div>
<div class="t" style="left:2365.0px;top:911.7px;font-size:20px;color:#e4e5e6;font-weight:400;">3</div>
<div class="t" style="left:2563.0px;top:911.7px;font-size:20px;color:#b9bbbe;font-weight:400;">3.2</div>
<div class="t" style="left:2761.0px;top:911.7px;font-size:20px;color:#b9bbbe;font-weight:400;">3.3</div>
<div class="t" style="left:2959.0px;top:911.7px;font-size:20px;color:#b9bbbe;font-weight:400;">3.4</div>
<div style="left:836px;top:960px;width:2004px;height:612px;background:#27282b;"></div>
<div style="left:836px;top:1007px;width:2004px;height:2px;background:#1b1c1e;"></div>
<div style="left:836px;top:1056px;width:2004px;height:2px;background:#1b1c1e;"></div>
<div style="left:836px;top:1105px;width:2004px;height:2px;background:#1b1c1e;"></div>
<div style="left:836px;top:1154px;width:2004px;height:2px;background:#1b1c1e;"></div>
<div style="left:836px;top:1203px;width:2004px;height:2px;background:#1b1c1e;"></div>
<div style="left:836px;top:1252px;width:2004px;height:2px;background:#1b1c1e;"></div>
<div style="left:836px;top:1301px;width:2004px;height:2px;background:#1b1c1e;"></div>
<div style="left:836px;top:1350px;width:2004px;height:2px;background:#1b1c1e;"></div>
<div style="left:836px;top:1399px;width:2004px;height:2px;background:#1b1c1e;"></div>
<div style="left:836px;top:1448px;width:2004px;height:2px;background:#1b1c1e;"></div>
<div style="left:836px;top:1497px;width:2004px;height:2px;background:#1b1c1e;"></div>
<div style="left:836px;top:1546px;width:2004px;height:2px;background:#1b1c1e;"></div>
<div style="left:875px;top:960px;width:2px;height:612px;background:#313337;"></div>
<div style="left:925px;top:960px;width:2px;height:612px;background:#313337;"></div>
<div style="left:974px;top:960px;width:2px;height:612px;background:#3c3e43;"></div>
<div style="left:1023px;top:960px;width:2px;height:612px;background:#313337;"></div>
<div style="left:1073px;top:960px;width:2px;height:612px;background:#313337;"></div>
<div style="left:1123px;top:960px;width:2px;height:612px;background:#313337;"></div>
<div style="left:1172px;top:960px;width:2px;height:612px;background:#3c3e43;"></div>
<div style="left:1221px;top:960px;width:2px;height:612px;background:#313337;"></div>
<div style="left:1271px;top:960px;width:2px;height:612px;background:#313337;"></div>
<div style="left:1321px;top:960px;width:2px;height:612px;background:#313337;"></div>
<div style="left:1370px;top:960px;width:2px;height:612px;background:#3c3e43;"></div>
<div style="left:1419px;top:960px;width:2px;height:612px;background:#313337;"></div>
<div style="left:1469px;top:960px;width:2px;height:612px;background:#313337;"></div>
<div style="left:1519px;top:960px;width:2px;height:612px;background:#313337;"></div>
<div style="left:1568px;top:960px;width:2px;height:612px;background:#4a4c52;"></div>
<div style="left:1617px;top:960px;width:2px;height:612px;background:#313337;"></div>
<div style="left:1667px;top:960px;width:2px;height:612px;background:#313337;"></div>
<div style="left:1717px;top:960px;width:2px;height:612px;background:#313337;"></div>
<div style="left:1766px;top:960px;width:2px;height:612px;background:#3c3e43;"></div>
<div style="left:1815px;top:960px;width:2px;height:612px;background:#313337;"></div>
<div style="left:1865px;top:960px;width:2px;height:612px;background:#313337;"></div>
<div style="left:1915px;top:960px;width:2px;height:612px;background:#313337;"></div>
<div style="left:1964px;top:960px;width:2px;height:612px;background:#3c3e43;"></div>
<div style="left:2013px;top:960px;width:2px;height:612px;background:#313337;"></div>
<div style="left:2063px;top:960px;width:2px;height:612px;background:#313337;"></div>
<div style="left:2113px;top:960px;width:2px;height:612px;background:#313337;"></div>
<div style="left:2162px;top:960px;width:2px;height:612px;background:#3c3e43;"></div>
<div style="left:2211px;top:960px;width:2px;height:612px;background:#313337;"></div>
<div style="left:2261px;top:960px;width:2px;height:612px;background:#313337;"></div>
<div style="left:2311px;top:960px;width:2px;height:612px;background:#313337;"></div>
<div style="left:2360px;top:960px;width:2px;height:612px;background:#4a4c52;"></div>
<div style="left:2409px;top:960px;width:2px;height:612px;background:#313337;"></div>
<div style="left:2459px;top:960px;width:2px;height:612px;background:#313337;"></div>
<div style="left:2509px;top:960px;width:2px;height:612px;background:#313337;"></div>
<div style="left:2558px;top:960px;width:2px;height:612px;background:#3c3e43;"></div>
<div style="left:2607px;top:960px;width:2px;height:612px;background:#313337;"></div>
<div style="left:2657px;top:960px;width:2px;height:612px;background:#313337;"></div>
<div style="left:2707px;top:960px;width:2px;height:612px;background:#313337;"></div>
<div style="left:2756px;top:960px;width:2px;height:612px;background:#3c3e43;"></div>
<div style="left:2805px;top:960px;width:2px;height:612px;background:#313337;"></div>
<svg style="position:absolute;left:1172px;top:961px;" width="24" height="42" viewBox="0 0 24 42"><polygon points="1,1 1,41 22,21" fill="#a9a9ab" stroke="#c4c4c6" stroke-width="1"/></svg>
<svg style="position:absolute;left:974px;top:1057px;" width="24" height="42" viewBox="0 0 24 42"><polygon points="1,1 1,41 22,21" fill="#a9a9ab" stroke="#c4c4c6" stroke-width="1"/></svg>
<svg style="position:absolute;left:1370px;top:1057px;" width="24" height="42" viewBox="0 0 24 42"><polygon points="1,1 1,41 22,21" fill="#a9a9ab" stroke="#c4c4c6" stroke-width="1"/></svg>
<svg style="position:absolute;left:974px;top:1253px;" width="24" height="42" viewBox="0 0 24 42"><polygon points="1,1 1,41 22,21" fill="#a9a9ab" stroke="#c4c4c6" stroke-width="1"/></svg>
<svg style="position:absolute;left:1172px;top:1253px;" width="24" height="42" viewBox="0 0 24 42"><polygon points="1,1 1,41 22,21" fill="#a9a9ab" stroke="#c4c4c6" stroke-width="1"/></svg>
<svg style="position:absolute;left:1370px;top:1253px;" width="24" height="42" viewBox="0 0 24 42"><polygon points="1,1 1,41 22,21" fill="#a9a9ab" stroke="#c4c4c6" stroke-width="1"/></svg>
<div style="left:2840px;top:960px;width:34px;height:612px;background:#27282b;"></div>
<svg style="position:absolute;left:2848px;top:1545px;" width="18" height="12" viewBox="0 0 18 12"><polygon points="0,0 18,0 9,12" fill="#6a6d72"/></svg>
<div style="left:389px;top:1572px;width:2485px;height:3px;background:#131416;"></div>
<div style="left:389px;top:1575px;width:2485px;height:33px;background:#26282c;"></div>
<svg style="position:absolute;left:392px;top:1582px;" width="34" height="22" viewBox="0 0 34 22"><path d="M2.5,18.6 L12.2,8 L16.3,13 L22.7,3.2 L29.2,8" fill="none" stroke="#e8e8e8" stroke-width="2.6"/></svg>
<svg style="position:absolute;left:441px;top:1580px;" width="20" height="20" viewBox="0 0 20 20"><rect x="8" y="1" width="4" height="18" fill="#c8cacc"/><rect x="1" y="8" width="18" height="4" fill="#c8cacc"/></svg>
<div style="left:484px;top:1589px;width:16px;height:4px;background:#c8cacc;"></div>
<svg style="position:absolute;left:860px;top:1582px;" width="12" height="16" viewBox="0 0 12 16"><polygon points="11,0 0,8 11,16" fill="#6a6d72"/></svg>
<div style="left:894px;top:1585px;width:26px;height:10px;background:#6a6d72;"></div>
<svg style="position:absolute;left:2560px;top:1583px;" width="14" height="18" viewBox="0 0 14 18"><polygon points="0,0 13,9 0,18" fill="#6a6d72"/></svg>
<svg style="position:absolute;left:2594px;top:1587px;" width="20" height="14" viewBox="0 0 20 14"><polygon points="0,13 10,0 20,13" fill="#6a6d72"/></svg>
<div style="left:2620px;top:1590px;width:132px;height:4px;background:#6a6d72;"></div>
<div style="left:2666px;top:1580px;width:7px;height:24px;background:#6a6d72;"></div>
<svg style="position:absolute;left:2762px;top:1580px;" width="28" height="22" viewBox="0 0 28 22"><polygon points="0,21 14,0 28,21" fill="#6a6d72"/></svg>
<svg style="position:absolute;left:2806px;top:1577px;" width="28" height="26" viewBox="0 0 28 26"><rect x="12" y="0" width="14" height="5" fill="#6a6d72"/><rect x="12" y="8" width="14" height="5" fill="#6a6d72"/><rect x="0" y="16" width="8" height="4" fill="#6a6d72"/><rect x="0" y="22" width="8" height="4" fill="#6a6d72"/></svg>
<div style="left:6px;top:1608px;width:2868px;height:3px;background:#131416;"></div>
<div style="left:0px;top:1611px;width:2880px;height:4px;background:#1b1c1e;"></div>
<div style="left:0px;top:1615px;width:2880px;height:99px;background:#5d6168;"></div>
<svg style="position:absolute;left:0px;top:1615px;" width="2510" height="86" viewBox="0 0 2510 86"><polygon points="30,0 2506,0 2480,85 48,85" fill="#151617"/></svg>
<div style="left:0px;top:1700px;width:2880px;height:14px;background:#55585d;"></div>
<div style="left:0px;top:1700px;width:2880px;height:2px;background:#3a3d42;"></div>
<svg style="position:absolute;left:80px;top:1630px;" width="58" height="38" viewBox="0 0 58 38"><polygon points="2,12 8,17 2,22" fill="#5a5d62"/><polygon points="50,12 56,17 50,22" fill="#5a5d62"/><circle cx="27" cy="17" r="13" fill="none" stroke="#5a5d62" stroke-width="2.5"/><rect x="20" y="8" width="4" height="3" fill="#5a5d62"/><rect x="30" y="8" width="4" height="3" fill="#5a5d62"/><rect x="16" y="15" width="4" height="3" fill="#5a5d62"/><rect x="34" y="15" width="4" height="3" fill="#5a5d62"/><rect x="25" y="22" width="4" height="3" fill="#5a5d62"/></svg>
<div class="t" style="left:86.0px;top:1666.1px;font-size:20px;color:#b4b7ba;font-weight:400;">MIDI</div>
<div style="left:156px;top:1632px;width:130px;height:10px;background:#32353a;"></div>
<div style="left:156px;top:1646px;width:130px;height:10px;background:#32353a;"></div>
<div style="left:156px;top:1632px;width:8px;height:10px;background:#4aa8dc;"></div>
<div style="left:276px;top:1632px;width:10px;height:24px;background:#26282b;"></div>
<div class="t" style="left:162.0px;top:1667.8px;font-size:21.5px;color:#b4b7ba;font-weight:400;">Performance</div>
<svg style="position:absolute;left:318px;top:1634px;" width="50" height="50" viewBox="0 0 50 50"><circle cx="45.0" cy="25.0" r="2.8" fill="#8e9196"/><circle cx="42.3" cy="35.0" r="2.8" fill="#8e9196"/><circle cx="35.0" cy="42.3" r="2.8" fill="#8e9196"/><circle cx="25.0" cy="45.0" r="2.8" fill="#8e9196"/><circle cx="15.0" cy="42.3" r="2.8" fill="#8e9196"/><circle cx="7.7" cy="35.0" r="2.8" fill="#8e9196"/><circle cx="5.0" cy="25.0" r="2.8" fill="#8e9196"/><circle cx="7.7" cy="15.0" r="2.8" fill="#8e9196"/><circle cx="15.0" cy="7.7" r="2.8" fill="#8e9196"/><circle cx="25.0" cy="5.0" r="2.8" fill="#8e9196"/><circle cx="35.0" cy="7.7" r="2.8" fill="#8e9196"/><circle cx="42.3" cy="15.0" r="2.8" fill="#8e9196"/></svg>
<div class="t" style="left:394.0px;top:1633.7px;font-size:24px;color:#e0e2e4;font-weight:400;letter-spacing:0.7px;">22:09 hours</div>
<div class="t" style="left:394.0px;top:1665.7px;font-size:21.6px;color:#a9acaf;font-weight:400;">Record Max</div>
<div class="t" style="left:571.0px;top:1629.2px;font-size:34px;color:#dcdee0;font-weight:700;-webkit-text-stroke:0.15px currentColor;letter-spacing:0.9px;">00001<span style="margin:0 3px 0 6px">.</span>01<span style="margin:0 3px 0 6px">.</span>01<span style="margin:0 3px 0 6px">.</span>00</div>
<div class="t" style="left:672.0px;top:1666.9px;font-size:19px;color:#a9acaf;font-weight:400;">Bars</div>
<svg style="position:absolute;left:878px;top:1644px;" width="28" height="28" viewBox="0 0 28 28"><polygon points="26,2 26,26 2,14" fill="#b4b6b8"/></svg>
<svg style="position:absolute;left:922px;top:1644px;" width="42" height="28" viewBox="0 0 42 28"><polygon points="20,2 20,26 2,14" fill="#b4b6b8"/><polygon points="38,2 38,26 20,14" fill="#b4b6b8"/></svg>
<svg style="position:absolute;left:986px;top:1644px;" width="42" height="28" viewBox="0 0 42 28"><polygon points="2,2 2,26 20,14" fill="#b4b6b8"/><polygon points="20,2 20,26 38,14" fill="#b4b6b8"/></svg>
<svg style="position:absolute;left:1040px;top:1644px;" width="28" height="28" viewBox="0 0 28 28"><polygon points="2,2 2,26 24,14" fill="#b4b6b8"/></svg>
<svg style="position:absolute;left:1088px;top:1642px;" width="30" height="30" viewBox="0 0 30 30"><rect x="1" y="2" width="3" height="26" fill="#f0f0f0"/><polygon points="26,2 26,28 5,15" fill="#f0f0f0"/></svg>
<div style="left:1156px;top:1636px;width:40px;height:40px;background:#2ab4e0;"></div>
<div style="left:1156px;top:1636px;width:40px;height:1px;background:#5ccaea;"></div>
<svg style="position:absolute;left:1230px;top:1634px;" width="40" height="44" viewBox="0 0 40 44"><polygon points="3,2 3,42 37,22" fill="#b4b6b8"/></svg>
<svg style="position:absolute;left:1295px;top:1634px;" width="44" height="44" viewBox="0 0 44 44"><circle cx="22" cy="22" r="20" fill="#b4b6b8"/></svg>
<svg style="position:absolute;left:1366px;top:1634px;" width="70" height="46" viewBox="0 0 70 46"><path d="M27,27 L21,41 L15,41 Q3,41 3,29 L3,16 Q3,4 15,4 L52,4 Q64,4 64,16 L64,29 Q64,41 52,41 L34,41 L40,28" fill="none" stroke="#8e9196" stroke-width="4" stroke-linejoin="round"/></svg>
<div class="t" style="left:1472.0px;top:1631.4px;font-size:22px;color:#5b8fb5;font-weight:700;-webkit-text-stroke:0.15px currentColor;">L</div>
<div class="t" style="left:1470.0px;top:1662.4px;font-size:22px;color:#5b8fb5;font-weight:700;-webkit-text-stroke:0.15px currentColor;">R</div>
<div class="t" style="left:1506.0px;top:1630.7px;font-size:24px;color:#dcdee0;font-weight:400;letter-spacing:1.5px;">00001 .01.01.00</div>
<div class="t" style="left:1506.0px;top:1660.7px;font-size:24px;color:#dcdee0;font-weight:400;letter-spacing:1.5px;">00009 .01.01.00</div>
<svg style="position:absolute;left:1724px;top:1636px;" width="38" height="14" viewBox="0 0 38 14"><path d="M2,3 L12,3 L18,10 L36,10 M2,10 L8,10" fill="none" stroke="#8e9196" stroke-width="2"/></svg>
<svg style="position:absolute;left:1729px;top:1663px;" width="26" height="26" viewBox="0 0 26 26"><circle cx="13" cy="13" r="9" fill="none" stroke="#8e9196" stroke-width="5" stroke-dasharray="3.5 3.6"/><circle cx="13" cy="13" r="7" fill="#8e9196"/><circle cx="13" cy="13" r="3" fill="#151617"/></svg>
<svg style="position:absolute;left:1778px;top:1634px;" width="32" height="20" viewBox="0 0 32 20"><rect x="1" y="2" width="2" height="16" fill="#8e9196"/><rect x="12" y="4" width="18" height="10" fill="#8e9196"/><path d="M5,10 L11,10" stroke="#8e9196" stroke-width="2" stroke-dasharray="2 2"/></svg>
<svg style="position:absolute;left:1776px;top:1664px;" width="36" height="20" viewBox="0 0 36 20"><rect x="10" y="3" width="2" height="14" fill="#8e9196"/><rect x="24" y="3" width="2" height="14" fill="#8e9196"/><rect x="12" y="8" width="12" height="5" fill="#8e9196"/><path d="M1,10 L8,10 M28,10 L35,10" stroke="#8e9196" stroke-width="2" stroke-dasharray="2 2"/></svg>
<svg style="position:absolute;left:1838px;top:1630px;" width="24" height="24" viewBox="0 0 24 24"><circle cx="12" cy="12" r="10" fill="#8e9196"/></svg>
<svg style="position:absolute;left:1875px;top:1630px;" width="28" height="26" viewBox="0 0 28 26"><path d="M4,8 Q1,2 7,1 L10,1 L7,5 L9,8 L12,6 L14,4 Q16,9 12,11 L24,22 Q25,24 23,25 L10,13 Q6,13 4,8 Z" fill="#8e9196"/></svg>
<svg style="position:absolute;left:1916px;top:1630px;" width="30" height="26" viewBox="0 0 30 26"><polygon points="15,2 28,24 2,24" fill="#8e9196"/><path d="M6,10 L16,20" stroke="#151617" stroke-width="2"/></svg>
<div class="t" style="left:1835.0px;top:1666.6px;font-size:21.7px;color:#b4b7ba;font-weight:400;">Metronome</div>
<div class="t" style="left:1970.0px;top:1630.7px;font-size:24px;color:#dcdee0;font-weight:400;width:80px;text-align:center;word-spacing:3px;">4 / 4</div>
<div class="t" style="left:1973.0px;top:1666.7px;font-size:21.6px;color:#b4b7ba;font-weight:400;width:80px;text-align:center;">Timing</div>
<div class="t" style="left:2083.0px;top:1630.7px;font-size:24px;color:#dcdee0;font-weight:400;width:40px;text-align:center;">-</div>
<div class="t" style="left:2073.0px;top:1667.2px;font-size:21px;color:#b4b7ba;font-weight:400;width:60px;text-align:center;">Key</div>
<div class="t" style="left:2150.0px;top:1629.4px;font-size:25.5px;color:#e4e6e8;font-weight:400;width:90px;text-align:center;">90.00</div>
<div class="t" style="left:2150.0px;top:1667.4px;font-size:22px;color:#b4b7ba;font-weight:400;width:90px;text-align:center;">Tempo</div>
<div style="left:2270px;top:1632px;width:134px;height:8px;background:#32353a;"></div>
<div style="left:2270px;top:1642px;width:134px;height:8px;background:#32353a;"></div>
<div style="left:2404px;top:1632px;width:44px;height:18px;background:#1c1e20;"></div>
<svg style="position:absolute;left:2270px;top:1666px;" width="136" height="18" viewBox="0 0 136 18"><rect x="0.0" y="0" width="1.8" height="18" fill="#5aaed8"/><rect x="3.4" y="0" width="1.8" height="18" fill="#5aaed8"/><rect x="6.8" y="0" width="1.8" height="18" fill="#5aaed8"/><rect x="10.2" y="0" width="1.8" height="18" fill="#5aaed8"/><rect x="13.6" y="0" width="1.8" height="18" fill="#5aaed8"/><rect x="17.0" y="0" width="1.8" height="18" fill="#5aaed8"/><rect x="20.4" y="0" width="1.8" height="18" fill="#5aaed8"/><rect x="23.8" y="0" width="1.8" height="18" fill="#5aaed8"/><rect x="27.2" y="0" width="1.8" height="18" fill="#5aaed8"/><rect x="30.6" y="0" width="1.8" height="18" fill="#5aaed8"/><rect x="34.0" y="0" width="1.8" height="18" fill="#5aaed8"/><rect x="37.4" y="0" width="1.8" height="18" fill="#5aaed8"/><rect x="40.8" y="0" width="1.8" height="18" fill="#5aaed8"/><rect x="44.2" y="0" width="1.8" height="18" fill="#5aaed8"/><rect x="47.6" y="0" width="1.8" height="18" fill="#5aaed8"/><rect x="51.0" y="0" width="1.8" height="18" fill="#5aaed8"/><rect x="54.4" y="0" width="1.8" height="18" fill="#5aaed8"/><rect x="57.8" y="0" width="1.8" height="18" fill="#5aaed8"/><rect x="61.2" y="0" width="1.8" height="18" fill="#5aaed8"/><rect x="64.6" y="0" width="1.8" height="18" fill="#5aaed8"/><rect x="68.0" y="0" width="1.8" height="18" fill="#5aaed8"/><rect x="71.4" y="0" width="1.8" height="18" fill="#5aaed8"/><rect x="74.8" y="0" width="1.8" height="18" fill="#5aaed8"/><rect x="78.2" y="0" width="1.8" height="18" fill="#5aaed8"/><rect x="81.6" y="0" width="1.8" height="18" fill="#5aaed8"/><rect x="85.0" y="0" width="1.8" height="18" fill="#5aaed8"/><rect x="88.4" y="0" width="1.8" height="18" fill="#5aaed8"/><rect x="91.8" y="0" width="1.8" height="18" fill="#5aaed8"/><rect x="95.2" y="0" width="1.8" height="18" fill="#3a3d42"/><rect x="98.6" y="0" width="1.8" height="18" fill="#3a3d42"/><rect x="102.0" y="0" width="1.8" height="18" fill="#3a3d42"/><rect x="105.4" y="0" width="1.8" height="18" fill="#3a3d42"/><rect x="108.8" y="0" width="1.8" height="18" fill="#3a3d42"/><rect x="112.2" y="0" width="1.8" height="18" fill="#3a3d42"/><rect x="115.6" y="0" width="1.8" height="18" fill="#3a3d42"/><rect x="119.0" y="0" width="1.8" height="18" fill="#3a3d42"/><rect x="122.4" y="0" width="1.8" height="18" fill="#3a3d42"/><rect x="125.8" y="0" width="1.8" height="18" fill="#3a3d42"/><rect x="129.2" y="0" width="1.8" height="18" fill="#3a3d42"/><rect x="132.6" y="0" width="1.8" height="18" fill="#3a3d42"/></svg>
<div style="left:2364px;top:1666px;width:4px;height:18px;background:#8cc4e4;"></div>
<svg style="position:absolute;left:2416px;top:1664px;" width="38" height="22" viewBox="0 0 38 22"><circle cx="10" cy="11" r="9" fill="#4ab8e0"/><circle cx="26" cy="11" r="8" fill="#151617" stroke="#4ab8e0" stroke-width="3.5"/></svg>
<div style="left:2526px;top:1617px;width:110px;height:83px;background:#3592d6;"></div>
<div style="left:2526px;top:1698px;width:110px;height:16px;background:#2c6a98;"></div>
<div style="left:2636px;top:1617px;width:1px;height:97px;background:#45484d;"></div>
<div style="left:2637px;top:1617px;width:111px;height:83px;background:#6b6f77;"></div>
<div style="left:2748px;top:1617px;width:1px;height:97px;background:#45484d;"></div>
<div style="left:2749px;top:1617px;width:131px;height:83px;background:#6b6f77;"></div>
<div class="t" style="left:2531.0px;top:1652.0px;font-size:26px;color:#f4f6f8;font-weight:400;width:100px;text-align:center;">Edit</div>
<div class="t" style="left:2642.0px;top:1652.0px;font-size:26px;color:#d6d8da;font-weight:400;width:100px;text-align:center;">Mix</div>
<div class="t" style="left:2754.0px;top:1652.0px;font-size:26px;color:#d6d8da;font-weight:400;width:120px;text-align:center;">Browse</div>
<div style="left:1426px;top:432px;width:1474px;height:948px;border-radius:9px;box-shadow:0 10px 36px 0 rgba(0,0,0,0.45);background:#ffffff;overflow:hidden;"></div>
<div style="left:1426px;top:432px;width:1474px;height:44px;border-radius:9px 9px 0 0;background:linear-gradient(#ededed,#d5d5d5);"></div>
<div style="left:1426px;top:475px;width:1454px;height:1px;background:#b1b1b1;"></div>
<svg style="position:absolute;left:1441px;top:441px;" width="26" height="26" viewBox="0 0 26 26"><circle cx="13" cy="13" r="11.5" fill="#fc605b" stroke="#de4a45" stroke-width="1"/></svg>
<svg style="position:absolute;left:1481px;top:441px;" width="26" height="26" viewBox="0 0 26 26"><circle cx="13" cy="13" r="11.5" fill="#fdbc40" stroke="#dea033" stroke-width="1"/></svg>
<svg style="position:absolute;left:1521px;top:441px;" width="26" height="26" viewBox="0 0 26 26"><circle cx="13" cy="13" r="11.5" fill="#33c748" stroke="#27a737" stroke-width="1"/></svg>
<svg style="position:absolute;left:1450px;top:450px;" width="8" height="8" viewBox="0 0 8 8"><circle cx="4" cy="4" r="3.6" fill="#4d0605"/></svg>
<svg style="position:absolute;left:2141px;top:439px;" width="26" height="32" viewBox="0 0 26 32"><path d="M2,1 L17,1 L24,8 L24,31 L2,31 Z" fill="#f6f6f6" stroke="#c8c8c8" stroke-width="1"/><rect x="4" y="12" width="17" height="16" rx="2" fill="#c0545e"/><text x="12.5" y="25" font-size="12" fill="#f4d8da" text-anchor="middle" font-family="Liberation Serif">&#167;</text></svg>
<div class="t" style="left:2179.0px;top:442.7px;font-size:25.7px;color:#4a4a4a;font-weight:400;letter-spacing:0.75px;">Sent from Studio One.notion</div>
<div style="left:1426px;top:476px;width:1454px;height:84px;background:#212222;"></div>
<svg style="position:absolute;left:1868px;top:476px;" width="536" height="76" viewBox="0 0 536 76"><polygon points="0,0 534,0 513,75 24,75" fill="#151515"/></svg>
<svg style="position:absolute;left:1444px;top:492px;" width="58" height="54" viewBox="0 0 58 54"><path d="M11,26 A20,20 0 1 1 31,46" fill="none" stroke="#b1b5b5" stroke-width="4"/><polygon points="1,24 17,24 9,37" fill="#b1b5b5"/></svg>
<svg style="position:absolute;left:1526px;top:492px;" width="58" height="54" viewBox="0 0 58 54"><path d="M47,26 A20,20 0 1 0 27,46" fill="none" stroke="#b1b5b5" stroke-width="4"/><polygon points="39,24 55,24 47,37" fill="#b1b5b5"/></svg>
<svg style="position:absolute;left:1768px;top:494px;" width="80" height="52" viewBox="0 0 80 52"><circle cx="40" cy="10" r="7" fill="#b1b5b5"/><rect x="36" y="14" width="8" height="8" fill="#b1b5b5"/><path d="M22,22 Q40,18 58,22 L58,47 L24,47 L24,35 Q14,33 10,28 Q5,20 4,12 L9,10 Q12,20 22,22 Z" fill="#b1b5b5"/><path d="M58,22 Q66,20 70,10 L72,5 L76,7 Q76,20 68,30 Q64,34 56,35 Z" fill="#b1b5b5"/><path d="M5,11 L30,1" stroke="#b1b5b5" stroke-width="2"/><circle cx="6" cy="12" r="3" fill="#b1b5b5"/><path d="M68,6 L70,1 M73,6 L77,2" stroke="#b1b5b5" stroke-width="2.5"/></svg>
<svg style="position:absolute;left:1906px;top:501px;" width="30" height="30" viewBox="0 0 30 30"><rect x="1.5" y="1.5" width="26" height="26" fill="none" stroke="#c3c3c3" stroke-width="2"/><text x="14.5" y="24" font-size="24" font-weight="700" fill="#c3c3c3" text-anchor="middle" font-family="Liberation Serif">A</text></svg>
<svg style="position:absolute;left:1958px;top:500px;" width="32" height="33" viewBox="0 0 32 33"><polygon points="0,33 0,25 7,25 7,17 15,17 15,9 23,9 23,0 32,0 32,33" fill="#c3c3c3"/></svg>
<svg style="position:absolute;left:2023px;top:497px;" width="24" height="38" viewBox="0 0 24 38"><circle cx="12" cy="11" r="11" fill="#c3c3c3"/><rect x="10.5" y="20" width="3" height="11" fill="#c3c3c3"/><rect x="1" y="31" width="22" height="5" fill="#c3c3c3"/></svg>
<svg style="position:absolute;left:2072px;top:497px;" width="36" height="36" viewBox="0 0 36 36"><polygon points="15,3 31,36 1,36" fill="#3ec1ee"/><path d="M7,14 L17,25" stroke="#151515" stroke-width="5" stroke-linecap="round"/><path d="M7,14 L17,25" stroke="#3ec1ee" stroke-width="2" stroke-linecap="round"/><circle cx="28" cy="7" r="6" fill="#c01d16"/></svg>
<svg style="position:absolute;left:2141px;top:497px;" width="36" height="38" viewBox="0 0 36 38"><rect x="1" y="1" width="4" height="36" fill="#c3c3c3"/><polygon points="34,1 34,37 5,19" fill="#c3c3c3"/></svg>
<div style="left:2204px;top:498px;width:36px;height:36px;background:#c3c3c3;"></div>
<svg style="position:absolute;left:2267px;top:497px;" width="34" height="38" viewBox="0 0 34 38"><polygon points="1,1 1,37 33,19" fill="#c3c3c3"/></svg>
<svg style="position:absolute;left:2327px;top:497px;" width="38" height="38" viewBox="0 0 38 38"><circle cx="19" cy="19" r="18" fill="#c3c3c3"/></svg>
<svg style="position:absolute;left:2486px;top:490px;" width="58" height="56" viewBox="0 0 58 56"><path d="M6,50 L12,30 L32,12 L44,24 L26,44 Z" fill="none" stroke="#b1b5b5" stroke-width="3.5" stroke-linejoin="round"/><circle cx="25" cy="31" r="4.5" fill="#b1b5b5"/><path d="M7,49 L24,33" stroke="#b1b5b5" stroke-width="2.5"/><path d="M33,6 L50,23 M34,12 L40,4 M45,23 L53,17" stroke="#b1b5b5" stroke-width="3"/></svg>
<svg style="position:absolute;left:2570px;top:492px;" width="70" height="52" viewBox="0 0 70 52"><rect x="2" y="2" width="64" height="48" rx="3" fill="none" stroke="#b1b5b5" stroke-width="3"/><rect x="10" y="3" width="10" height="27" fill="#b1b5b5"/><rect x="28" y="3" width="10" height="27" fill="#b1b5b5"/><rect x="46" y="3" width="10" height="27" fill="#b1b5b5"/><path d="M15,30 L15,48 M33,30 L33,48 M51,30 L51,48" stroke="#b1b5b5" stroke-width="2"/></svg>
<svg style="position:absolute;left:2672px;top:488px;" width="76" height="60" viewBox="0 0 76 60"><circle cx="40" cy="37" r="16" fill="none" stroke="#b1b5b5" stroke-width="4"/><rect x="2" y="10" width="19" height="22" fill="none" stroke="#b1b5b5" stroke-width="2.5"/><path d="M8,32 L8,45 M14,32 L14,45" stroke="#b1b5b5" stroke-width="2"/><rect x="40" y="2" width="16" height="9" fill="none" stroke="#b1b5b5" stroke-width="2.5"/><path d="M40,11 L38,22" stroke="#b1b5b5" stroke-width="2.5"/><rect x="54" y="13" width="17" height="8" fill="none" stroke="#b1b5b5" stroke-width="2.5"/><path d="M62,21 L62,35 L72,46 M62,35 L54,46 M30,52 L25,58 M52,52 L56,58" fill="none" stroke="#b1b5b5" stroke-width="2.5"/></svg>
<svg style="position:absolute;left:2766px;top:482px;" width="100" height="70" viewBox="0 0 100 70"><g transform="translate(-2766,-482)"><path d="M2813,510 Q2808,500 2800,506 Q2794,511 2784,511 Q2771,513 2775,527 Q2782,546 2795,545 Q2804,544 2808,535 Q2812,528 2819,526 Q2828,521 2822,513 Z" fill="none" stroke="#b1b5b5" stroke-width="2.6" stroke-linejoin="round"/><path d="M2816,510 L2855,489 L2858,495 L2820,517" fill="none" stroke="#b1b5b5" stroke-width="2.4"/><circle cx="2804" cy="520" r="5" fill="#b1b5b5"/><path d="M2789,521 L2795,533" stroke="#b1b5b5" stroke-width="3.5"/></g></svg>
<div style="left:1426px;top:560px;width:1454px;height:29px;background:#133848;"></div>
<div style="left:1426px;top:588px;width:1454px;height:1px;background:#0a2530;"></div>
<div style="left:1426px;top:560px;width:126px;height:29px;background:#4e6a77;border-radius:0 5px 5px 0;"></div>
<div style="left:1555px;top:560px;width:6px;height:29px;background:#7cc4e8;"></div>
<div style="left:1557px;top:560px;width:2px;height:29px;background:#c8ecff;"></div>
<div style="left:1466px;top:560px;width:2px;height:20px;background:#9fb0ba;"></div>
<div style="left:1475px;top:561px;width:2px;height:8px;background:#9fb0ba;"></div>
<div style="left:1487px;top:561px;width:2px;height:8px;background:#9fb0ba;"></div>
<div style="left:1499px;top:561px;width:2px;height:8px;background:#9fb0ba;"></div>
<div style="left:1510px;top:561px;width:2px;height:8px;background:#9fb0ba;"></div>
<div style="left:1522px;top:561px;width:2px;height:8px;background:#9fb0ba;"></div>
<div style="left:1533px;top:561px;width:2px;height:8px;background:#9fb0ba;"></div>
<div style="left:1545px;top:561px;width:2px;height:8px;background:#9fb0ba;"></div>
<div style="left:1568px;top:560px;width:2px;height:20px;background:#9fb0ba;"></div>
<div style="left:1579px;top:561px;width:2px;height:8px;background:#9fb0ba;"></div>
<div style="left:1591px;top:561px;width:2px;height:8px;background:#9fb0ba;"></div>
<div style="left:1602px;top:561px;width:2px;height:8px;background:#9fb0ba;"></div>
<div style="left:1614px;top:561px;width:2px;height:8px;background:#9fb0ba;"></div>
<div style="left:1626px;top:561px;width:2px;height:8px;background:#9fb0ba;"></div>
<div style="left:1637px;top:561px;width:2px;height:8px;background:#9fb0ba;"></div>
<div style="left:1649px;top:561px;width:2px;height:8px;background:#9fb0ba;"></div>
<div style="left:1660px;top:561px;width:2px;height:8px;background:#9fb0ba;"></div>
<div style="left:1672px;top:561px;width:2px;height:8px;background:#9fb0ba;"></div>
<div style="left:1683px;top:560px;width:2px;height:20px;background:#9fb0ba;"></div>
<div style="left:1695px;top:561px;width:2px;height:8px;background:#9fb0ba;"></div>
<div style="left:1706px;top:561px;width:2px;height:8px;background:#9fb0ba;"></div>
<div style="left:1718px;top:561px;width:2px;height:8px;background:#9fb0ba;"></div>
<div style="left:1729px;top:561px;width:2px;height:8px;background:#9fb0ba;"></div>
<div style="left:1741px;top:561px;width:2px;height:8px;background:#9fb0ba;"></div>
<div style="left:1753px;top:561px;width:2px;height:8px;background:#9fb0ba;"></div>
<div style="left:1764px;top:561px;width:2px;height:8px;background:#9fb0ba;"></div>
<div style="left:1776px;top:561px;width:2px;height:8px;background:#9fb0ba;"></div>
<div style="left:1787px;top:561px;width:2px;height:8px;background:#9fb0ba;"></div>
<div style="left:1799px;top:560px;width:2px;height:20px;background:#9fb0ba;"></div>
<div style="left:1810px;top:561px;width:2px;height:8px;background:#9fb0ba;"></div>
<div style="left:1822px;top:561px;width:2px;height:8px;background:#9fb0ba;"></div>
<div style="left:1833px;top:561px;width:2px;height:8px;background:#9fb0ba;"></div>
<div style="left:1845px;top:561px;width:2px;height:8px;background:#9fb0ba;"></div>
<div style="left:1857px;top:561px;width:2px;height:8px;background:#9fb0ba;"></div>
<div style="left:1868px;top:561px;width:2px;height:8px;background:#9fb0ba;"></div>
<div style="left:1880px;top:561px;width:2px;height:8px;background:#9fb0ba;"></div>
<div style="left:1891px;top:561px;width:2px;height:8px;background:#9fb0ba;"></div>
<div style="left:1903px;top:561px;width:2px;height:8px;background:#9fb0ba;"></div>
<div style="left:1914px;top:560px;width:2px;height:20px;background:#9fb0ba;"></div>
<div style="left:1926px;top:561px;width:2px;height:8px;background:#9fb0ba;"></div>
<div style="left:1937px;top:561px;width:2px;height:8px;background:#9fb0ba;"></div>
<div style="left:1949px;top:561px;width:2px;height:8px;background:#9fb0ba;"></div>
<div style="left:1961px;top:561px;width:2px;height:8px;background:#9fb0ba;"></div>
<div style="left:1972px;top:561px;width:2px;height:8px;background:#9fb0ba;"></div>
<div style="left:1984px;top:561px;width:2px;height:8px;background:#9fb0ba;"></div>
<div style="left:1995px;top:561px;width:2px;height:8px;background:#9fb0ba;"></div>
<div style="left:2007px;top:561px;width:2px;height:8px;background:#9fb0ba;"></div>
<div style="left:2018px;top:561px;width:2px;height:8px;background:#9fb0ba;"></div>
<div style="left:2030px;top:560px;width:2px;height:20px;background:#9fb0ba;"></div>
<div style="left:2041px;top:561px;width:2px;height:8px;background:#9fb0ba;"></div>
<div style="left:2053px;top:561px;width:2px;height:8px;background:#9fb0ba;"></div>
<div style="left:2064px;top:561px;width:2px;height:8px;background:#9fb0ba;"></div>
<div style="left:2076px;top:561px;width:2px;height:8px;background:#9fb0ba;"></div>
<div style="left:2088px;top:561px;width:2px;height:8px;background:#9fb0ba;"></div>
<div style="left:2099px;top:561px;width:2px;height:8px;background:#9fb0ba;"></div>
<div style="left:2111px;top:561px;width:2px;height:8px;background:#9fb0ba;"></div>
<div style="left:2122px;top:561px;width:2px;height:8px;background:#9fb0ba;"></div>
<div style="left:2134px;top:561px;width:2px;height:8px;background:#9fb0ba;"></div>
<div style="left:2145px;top:560px;width:2px;height:20px;background:#9fb0ba;"></div>
<div style="left:2157px;top:561px;width:2px;height:8px;background:#9fb0ba;"></div>
<div style="left:2168px;top:561px;width:2px;height:8px;background:#9fb0ba;"></div>
<div style="left:2180px;top:561px;width:2px;height:8px;background:#9fb0ba;"></div>
<div style="left:2191px;top:561px;width:2px;height:8px;background:#9fb0ba;"></div>
<div style="left:2203px;top:561px;width:2px;height:8px;background:#9fb0ba;"></div>
<div style="left:2215px;top:561px;width:2px;height:8px;background:#9fb0ba;"></div>
<div style="left:2226px;top:561px;width:2px;height:8px;background:#9fb0ba;"></div>
<div style="left:2238px;top:561px;width:2px;height:8px;background:#9fb0ba;"></div>
<div style="left:2249px;top:561px;width:2px;height:8px;background:#9fb0ba;"></div>
<div style="left:2261px;top:560px;width:2px;height:20px;background:#9fb0ba;"></div>
<div style="left:2272px;top:561px;width:2px;height:8px;background:#9fb0ba;"></div>
<div style="left:2284px;top:561px;width:2px;height:8px;background:#9fb0ba;"></div>
<div style="left:2295px;top:561px;width:2px;height:8px;background:#9fb0ba;"></div>
<div style="left:2307px;top:561px;width:2px;height:8px;background:#9fb0ba;"></div>
<div style="left:2319px;top:561px;width:2px;height:8px;background:#9fb0ba;"></div>
<div style="left:2330px;top:561px;width:2px;height:8px;background:#9fb0ba;"></div>
<div style="left:2342px;top:561px;width:2px;height:8px;background:#9fb0ba;"></div>
<div style="left:2353px;top:561px;width:2px;height:8px;background:#9fb0ba;"></div>
<div style="left:2365px;top:561px;width:2px;height:8px;background:#9fb0ba;"></div>
<div style="left:2376px;top:560px;width:2px;height:20px;background:#9fb0ba;"></div>
<div style="left:2388px;top:561px;width:2px;height:8px;background:#9fb0ba;"></div>
<div style="left:2399px;top:561px;width:2px;height:8px;background:#9fb0ba;"></div>
<div style="left:2411px;top:561px;width:2px;height:8px;background:#9fb0ba;"></div>
<div style="left:2423px;top:561px;width:2px;height:8px;background:#9fb0ba;"></div>
<div style="left:2434px;top:561px;width:2px;height:8px;background:#9fb0ba;"></div>
<div style="left:2446px;top:561px;width:2px;height:8px;background:#9fb0ba;"></div>
<div style="left:2457px;top:561px;width:2px;height:8px;background:#9fb0ba;"></div>
<div style="left:2469px;top:561px;width:2px;height:8px;background:#9fb0ba;"></div>
<div style="left:2480px;top:561px;width:2px;height:8px;background:#9fb0ba;"></div>
<div style="left:2492px;top:560px;width:2px;height:20px;background:#9fb0ba;"></div>
<div style="left:2503px;top:561px;width:2px;height:8px;background:#9fb0ba;"></div>
<div style="left:2515px;top:561px;width:2px;height:8px;background:#9fb0ba;"></div>
<div style="left:2526px;top:561px;width:2px;height:8px;background:#9fb0ba;"></div>
<div style="left:2538px;top:561px;width:2px;height:8px;background:#9fb0ba;"></div>
<div style="left:2550px;top:561px;width:2px;height:8px;background:#9fb0ba;"></div>
<div style="left:2561px;top:561px;width:2px;height:8px;background:#9fb0ba;"></div>
<div style="left:2573px;top:561px;width:2px;height:8px;background:#9fb0ba;"></div>
<div style="left:2584px;top:561px;width:2px;height:8px;background:#9fb0ba;"></div>
<div style="left:2596px;top:561px;width:2px;height:8px;background:#9fb0ba;"></div>
<div style="left:2607px;top:560px;width:2px;height:20px;background:#9fb0ba;"></div>
<div style="left:2619px;top:561px;width:2px;height:8px;background:#9fb0ba;"></div>
<div style="left:2630px;top:561px;width:2px;height:8px;background:#9fb0ba;"></div>
<div style="left:2642px;top:561px;width:2px;height:8px;background:#9fb0ba;"></div>
<div style="left:2653px;top:561px;width:2px;height:8px;background:#9fb0ba;"></div>
<div style="left:2665px;top:561px;width:2px;height:8px;background:#9fb0ba;"></div>
<div style="left:2677px;top:561px;width:2px;height:8px;background:#9fb0ba;"></div>
<div style="left:2688px;top:561px;width:2px;height:8px;background:#9fb0ba;"></div>
<div style="left:2700px;top:561px;width:2px;height:8px;background:#9fb0ba;"></div>
<div style="left:2711px;top:561px;width:2px;height:8px;background:#9fb0ba;"></div>
<div style="left:2723px;top:560px;width:2px;height:20px;background:#9fb0ba;"></div>
<div style="left:2734px;top:561px;width:2px;height:8px;background:#9fb0ba;"></div>
<div style="left:2746px;top:561px;width:2px;height:8px;background:#9fb0ba;"></div>
<div style="left:2757px;top:561px;width:2px;height:8px;background:#9fb0ba;"></div>
<div style="left:2769px;top:561px;width:2px;height:8px;background:#9fb0ba;"></div>
<div style="left:2781px;top:561px;width:2px;height:8px;background:#9fb0ba;"></div>
<div style="left:2792px;top:561px;width:2px;height:8px;background:#9fb0ba;"></div>
<div style="left:2804px;top:561px;width:2px;height:8px;background:#9fb0ba;"></div>
<div style="left:2815px;top:561px;width:2px;height:8px;background:#9fb0ba;"></div>
<div style="left:2827px;top:561px;width:2px;height:8px;background:#9fb0ba;"></div>
<div style="left:2838px;top:560px;width:2px;height:20px;background:#9fb0ba;"></div>
<div style="left:2850px;top:561px;width:2px;height:8px;background:#9fb0ba;"></div>
<div style="left:2861px;top:561px;width:2px;height:8px;background:#9fb0ba;"></div>
<div style="left:2873px;top:561px;width:2px;height:8px;background:#9fb0ba;"></div>
<div class="t" style="left:1471.8px;top:570.2px;font-size:17.5px;color:#a4b0b8;font-weight:400;-webkit-text-stroke:0.1px currentColor;">1</div>
<div class="t" style="left:1573.8px;top:570.2px;font-size:17.5px;color:#a4b0b8;font-weight:400;-webkit-text-stroke:0.1px currentColor;">10</div>
<div class="t" style="left:1689.3px;top:570.2px;font-size:17.5px;color:#a4b0b8;font-weight:400;-webkit-text-stroke:0.1px currentColor;">20</div>
<div class="t" style="left:1804.8px;top:570.2px;font-size:17.5px;color:#a4b0b8;font-weight:400;-webkit-text-stroke:0.1px currentColor;">30</div>
<div class="t" style="left:1920.3px;top:570.2px;font-size:17.5px;color:#a4b0b8;font-weight:400;-webkit-text-stroke:0.1px currentColor;">40</div>
<div class="t" style="left:2035.8px;top:570.2px;font-size:17.5px;color:#a4b0b8;font-weight:400;-webkit-text-stroke:0.1px currentColor;">50</div>
<div class="t" style="left:2151.3px;top:570.2px;font-size:17.5px;color:#a4b0b8;font-weight:400;-webkit-text-stroke:0.1px currentColor;">60</div>
<div class="t" style="left:2266.8px;top:570.2px;font-size:17.5px;color:#a4b0b8;font-weight:400;-webkit-text-stroke:0.1px currentColor;">70</div>
<div class="t" style="left:2382.3px;top:570.2px;font-size:17.5px;color:#a4b0b8;font-weight:400;-webkit-text-stroke:0.1px currentColor;">80</div>
<div class="t" style="left:2497.8px;top:570.2px;font-size:17.5px;color:#a4b0b8;font-weight:400;-webkit-text-stroke:0.1px currentColor;">90</div>
<div class="t" style="left:2613.3px;top:570.2px;font-size:17.5px;color:#a4b0b8;font-weight:400;-webkit-text-stroke:0.1px currentColor;">100</div>
<div class="t" style="left:2728.8px;top:570.2px;font-size:17.5px;color:#a4b0b8;font-weight:400;-webkit-text-stroke:0.1px currentColor;">110</div>
<div class="t" style="left:2844.3px;top:570.2px;font-size:17.5px;color:#a4b0b8;font-weight:400;-webkit-text-stroke:0.1px currentColor;">120</div>
<div style="left:1426px;top:589px;width:1454px;height:42px;background:linear-gradient(#bdbdbe,#ffffff);"></div>
<div style="left:1426px;top:1349px;width:1474px;height:31px;background:#f6f6f6;border-radius:0 0 9px 9px;"></div>
<div style="left:1426px;top:1349px;width:1454px;height:1px;background:#e4e4e4;"></div>
<div style="left:1599px;top:1358px;width:1262px;height:15px;background:#c1c1c1;border-radius:8px;"></div>
<div style="left:1426px;top:1368px;width:30px;height:12px;"></div>
<div class="t" style="left:1632.0px;top:1038.8px;font-size:25px;color:#000;font-weight:700;-webkit-text-stroke:0.15px currentColor;">4</div>
<svg style="position:absolute;left:1426px;top:589px;" width="1454" height="760" viewBox="0 0 1454 760"><g transform="translate(-1426,-589)"><rect x="1621" y="743.5" width="1259" height="1.7" fill="#6b6b6b"/><rect x="1621" y="757.8" width="1259" height="1.7" fill="#6b6b6b"/><rect x="1621" y="772.1" width="1259" height="1.7" fill="#6b6b6b"/><rect x="1621" y="786.5" width="1259" height="1.7" fill="#6b6b6b"/><rect x="1621" y="800.8" width="1259" height="1.7" fill="#6b6b6b"/><rect x="1621" y="873.4" width="1259" height="1.7" fill="#6b6b6b"/><rect x="1621" y="887.7" width="1259" height="1.7" fill="#6b6b6b"/><rect x="1621" y="902.0" width="1259" height="1.7" fill="#6b6b6b"/><rect x="1621" y="916.4" width="1259" height="1.7" fill="#6b6b6b"/><rect x="1621" y="930.7" width="1259" height="1.7" fill="#6b6b6b"/><rect x="1621" y="1105.3" width="1259" height="1.7" fill="#6b6b6b"/><rect x="1621" y="1119.6" width="1259" height="1.7" fill="#6b6b6b"/><rect x="1621" y="1133.9" width="1259" height="1.7" fill="#6b6b6b"/><rect x="1621" y="1148.3" width="1259" height="1.7" fill="#6b6b6b"/><rect x="1621" y="1162.6" width="1259" height="1.7" fill="#6b6b6b"/><rect x="1621" y="1235.4" width="1259" height="1.7" fill="#6b6b6b"/><rect x="1621" y="1249.7" width="1259" height="1.7" fill="#6b6b6b"/><rect x="1621" y="1264.0" width="1259" height="1.7" fill="#6b6b6b"/><rect x="1621" y="1278.4" width="1259" height="1.7" fill="#6b6b6b"/><rect x="1621" y="1292.7" width="1259" height="1.7" fill="#6b6b6b"/><rect x="1621" y="743.5" width="3.8" height="188.8" fill="#000"/><rect x="1621" y="1105.3" width="3.8" height="189.0" fill="#000"/><rect x="2115.2" y="744.3" width="3.6" height="57.3" fill="#000"/><rect x="2115.2" y="874.2" width="3.6" height="57.3" fill="#000"/><rect x="2633.2" y="744.3" width="3.6" height="57.3" fill="#000"/><rect x="2633.2" y="874.2" width="3.6" height="57.3" fill="#000"/><rect x="2505.2" y="1106.1" width="3.6" height="57.3" fill="#000"/><rect x="2505.2" y="1236.2" width="3.6" height="57.3" fill="#000"/><g transform="translate(0,0)"><path d="M1644,713 Q1657,717 1655,734 Q1653,750 1643,762 Q1631,778 1633,795 Q1637,812 1652,812 Q1670,809 1671,787 Q1669,770 1659,770 Q1647,772 1643,786 L1644,800" fill="none" stroke="#000" stroke-width="6.5" stroke-linecap="round" stroke-linejoin="round"/><path d="M1644,713 L1647,742 L1656,812 Q1659,826 1653,836" fill="none" stroke="#000" stroke-width="4" stroke-linecap="round"/><circle cx="1653" cy="832" r="3.5" fill="#000"/></g><g transform="translate(0,361.79999999999995)"><path d="M1644,713 Q1657,717 1655,734 Q1653,750 1643,762 Q1631,778 1633,795 Q1637,812 1652,812 Q1670,809 1671,787 Q1669,770 1659,770 Q1647,772 1643,786 L1644,800" fill="none" stroke="#000" stroke-width="6.5" stroke-linecap="round" stroke-linejoin="round"/><path d="M1644,713 L1647,742 L1656,812 Q1659,826 1653,836" fill="none" stroke="#000" stroke-width="4" stroke-linecap="round"/><circle cx="1653" cy="832" r="3.5" fill="#000"/></g><path d="M1698,722.7 L1699,773.7 M1705,712.7 L1706,763.7" stroke="#000" stroke-width="2.8"/><polygon points="1693,735.7 1710,731.7 1710,739.7 1693,743.7" fill="#000"/><polygon points="1693,749.7 1710,745.7 1710,754.7 1693,758.7" fill="#000"/><path d="M1718,743 L1719,794 M1725,733 L1726,784" stroke="#000" stroke-width="2.8"/><polygon points="1713,756 1730,752 1730,760 1713,764" fill="#000"/><polygon points="1713,770 1730,766 1730,775 1713,779" fill="#000"/><path d="M1698,1084.5 L1699,1135.5 M1705,1074.5 L1706,1125.5" stroke="#000" stroke-width="2.8"/><polygon points="1693,1097.5 1710,1093.5 1710,1101.5 1693,1105.5" fill="#000"/><polygon points="1693,1111.5 1710,1107.5 1710,1116.5 1693,1120.5" fill="#000"/><path d="M1718,1104.8 L1719,1155.8 M1725,1094.8 L1726,1145.8" stroke="#000" stroke-width="2.8"/><polygon points="1713,1117.8 1730,1113.8 1730,1121.8 1713,1125.8" fill="#000"/><polygon points="1713,1131.8 1730,1127.8 1730,1136.8 1713,1140.8" fill="#000"/><path d="M1634,886.2 L1635,920.2 M1645,886.2 L1646,920.2" stroke="#000" stroke-width="5.5" stroke-linecap="round"/><path d="M1634,1248.2 L1635,1282.2 M1645,1248.2 L1646,1282.2" stroke="#000" stroke-width="5.5" stroke-linecap="round"/><path d="M1763,742 L1750,763 L1771,765 M1764,742 L1764,772" fill="none" stroke="#000" stroke-width="4.2" stroke-linecap="round" stroke-linejoin="round"/><rect x="1757" y="769" width="13" height="4" fill="#000"/><path d="M1763,771 L1750,792 L1771,794 M1764,771 L1764,801" fill="none" stroke="#000" stroke-width="4.2" stroke-linecap="round" stroke-linejoin="round"/><rect x="1757" y="798" width="13" height="4" fill="#000"/><path d="M1763,872.2 L1750,893.2 L1771,895.2 M1764,872.2 L1764,902.2" fill="none" stroke="#000" stroke-width="4.2" stroke-linecap="round" stroke-linejoin="round"/><rect x="1757" y="899.2" width="13" height="4" fill="#000"/><path d="M1763,901.2 L1750,922.2 L1771,924.2 M1764,901.2 L1764,931.2" fill="none" stroke="#000" stroke-width="4.2" stroke-linecap="round" stroke-linejoin="round"/><rect x="1757" y="928.2" width="13" height="4" fill="#000"/><rect x="1799" y="764" width="23" height="9" fill="#000"/><path d="M1937,751 Q1944,760 1946,764 L1938,774 Q1946,780 1948,787 Q1940,786 1942,795" fill="none" stroke="#000" stroke-width="6" stroke-linejoin="round" stroke-linecap="round"/><ellipse cx="1808.0" cy="701.0" rx="11.3" ry="7.6" transform="rotate(-22 1808.0 701.0)" fill="#000"/><line x1="1816.0" y1="676.0" x2="1816.0" y2="700.0" stroke="#000" stroke-width="2.2"/><text x="1823" y="708" font-family="Liberation Serif" font-weight="700" font-style="italic" font-size="21" fill="#000">= 90</text><ellipse cx="2007.5" cy="830.2" rx="11.3" ry="7.6" transform="rotate(-22 2007.5 830.2)" fill="#000"/><line x1="2017.0" y1="828.2" x2="2017.0" y2="766.0" stroke="#000" stroke-width="2.6"/><ellipse cx="2064.0" cy="801.6" rx="11.3" ry="7.6" transform="rotate(-22 2064.0 801.6)" fill="#000"/><line x1="2073.5" y1="799.6" x2="2073.5" y2="752.0" stroke="#000" stroke-width="2.6"/><line x1="1994.0" y1="816.2" x2="2023.0" y2="816.2" stroke="#000" stroke-width="1.6"/><line x1="1994.0" y1="830.5" x2="2023.0" y2="830.5" stroke="#000" stroke-width="1.6"/><polygon points="2016.0,765.8 2075.0,751.6 2075.0,759.2 2016.0,773.4" fill="#000"/><ellipse cx="2153.9" cy="801.6" rx="11.3" ry="7.6" transform="rotate(-22 2153.9 801.6)" fill="#000"/><line x1="2163.4" y1="799.6" x2="2163.4" y2="745.0" stroke="#000" stroke-width="2.6"/><ellipse cx="2209.5" cy="794.4" rx="11.3" ry="7.6" transform="rotate(-22 2209.5 794.4)" fill="#000"/><line x1="2219.0" y1="792.4" x2="2219.0" y2="745.0" stroke="#000" stroke-width="2.6"/><ellipse cx="2265.5" cy="794.4" rx="11.3" ry="7.6" transform="rotate(-22 2265.5 794.4)" fill="#000"/><line x1="2275.0" y1="792.4" x2="2275.0" y2="745.0" stroke="#000" stroke-width="2.6"/><ellipse cx="2321.5" cy="801.6" rx="11.3" ry="7.6" transform="rotate(-22 2321.5 801.6)" fill="#000"/><line x1="2331.0" y1="799.6" x2="2331.0" y2="745.0" stroke="#000" stroke-width="2.6"/><polygon points="2162.0,744.3 2332.5,744.3 2332.5,752.3 2162.0,752.3" fill="#000"/><ellipse cx="2377.5" cy="801.6" rx="11.3" ry="7.6" transform="rotate(-22 2377.5 801.6)" fill="#000"/><line x1="2387.0" y1="799.6" x2="2387.0" y2="752.0" stroke="#000" stroke-width="2.6"/><ellipse cx="2427.5" cy="808.7" rx="11.3" ry="7.6" transform="rotate(-22 2427.5 808.7)" fill="#000"/><line x1="2437.0" y1="806.7" x2="2437.0" y2="752.0" stroke="#000" stroke-width="2.6"/><ellipse cx="2483.5" cy="808.7" rx="11.3" ry="7.6" transform="rotate(-22 2483.5 808.7)" fill="#000"/><line x1="2493.0" y1="806.7" x2="2493.0" y2="752.0" stroke="#000" stroke-width="2.6"/><polygon points="2386.0,751.2 2494.5,754.4 2494.5,762.0 2386.0,758.8" fill="#000"/><polygon points="2386.0,765.6 2400.0,765.6 2400.0,773.2 2386.0,773.2" fill="#000"/><polygon points="2477.0,768.5 2494.0,768.8 2494.0,776.8 2477.0,776.5" fill="#000"/><path d="M2488,822.7 Q2509.0,828.7 2530,822.7 Q2509.0,825.7 2488,822.7" fill="#000" stroke="#000" stroke-width="1.2"/><ellipse cx="2531.5" cy="808.7" rx="11.3" ry="7.6" transform="rotate(-22 2531.5 808.7)" fill="#000"/><line x1="2541.0" y1="806.7" x2="2541.0" y2="760.0" stroke="#000" stroke-width="2.6"/><ellipse cx="2587.5" cy="808.7" rx="11.3" ry="7.6" transform="rotate(-22 2587.5 808.7)" fill="#000"/><line x1="2597.0" y1="806.7" x2="2597.0" y2="760.0" stroke="#000" stroke-width="2.6"/><circle cx="2550.6" cy="808.9" r="2.7" fill="#000"/><polygon points="2540.0,759.0 2598.5,759.0 2598.5,767.0 2540.0,767.0" fill="#000"/><polygon points="2581.0,772.3 2598.0,772.3 2598.0,780.8 2581.0,780.8" fill="#000"/><ellipse cx="2671.5" cy="801.6" rx="11.3" ry="7.6" transform="rotate(-22 2671.5 801.6)" fill="#000"/><line x1="2681.0" y1="799.6" x2="2681.0" y2="750.0" stroke="#000" stroke-width="2.6"/><ellipse cx="2734.0" cy="801.6" rx="11.3" ry="7.6" transform="rotate(-22 2734.0 801.6)" fill="#000"/><line x1="2743.5" y1="799.6" x2="2743.5" y2="750.0" stroke="#000" stroke-width="2.6"/><ellipse cx="2783.5" cy="808.7" rx="11.3" ry="7.6" transform="rotate(-22 2783.5 808.7)" fill="#000"/><line x1="2793.0" y1="806.7" x2="2793.0" y2="750.0" stroke="#000" stroke-width="2.6"/><polygon points="2680.0,747.7 2794.5,751.2 2794.5,758.8 2680.0,755.3" fill="#000"/><polygon points="2743.0,764.2 2794.5,765.8 2794.5,773.8 2743.0,772.2" fill="#000"/><ellipse cx="2832.5" cy="801.6" rx="11.3" ry="7.6" transform="rotate(-22 2832.5 801.6)" fill="#000"/><line x1="2842.0" y1="799.6" x2="2842.0" y2="750.0" stroke="#000" stroke-width="2.6"/><polygon points="2841.0,747.7 2880.0,748.3 2880.0,755.9 2841.0,755.3" fill="#000"/><polygon points="2841.0,760.8 2880.0,762.0 2880.0,770.0 2841.0,768.8" fill="#000"/><ellipse cx="2880.0" cy="808.7" rx="11.3" ry="7.6" transform="rotate(-22 2880.0 808.7)" fill="#000"/><path d="M1802.6,859.2 Q1801.3,865.2 1809.3,871.7" fill="none" stroke="#000" stroke-width="4.6" stroke-linecap="round"/><path d="M1811.3,857.7 L1803.8,869.7 M1800.8,874.2 L1803.8,870.2" fill="none" stroke="#000" stroke-width="2.4" stroke-linecap="round"/><line x1="1800.8" y1="871.2" x2="1800.8" y2="972.7" stroke="#000" stroke-width="2.6"/><ellipse cx="1809.3" cy="924.6" rx="11.3" ry="7.6" transform="rotate(-22 1809.3 924.6)" fill="#000"/><path d="M1868.4,859.2 Q1867.1,865.2 1875.1,871.7" fill="none" stroke="#000" stroke-width="4.6" stroke-linecap="round"/><path d="M1877.1,857.7 L1869.6,869.7 M1866.6,874.2 L1869.6,870.2" fill="none" stroke="#000" stroke-width="2.4" stroke-linecap="round"/><line x1="1866.6" y1="871.2" x2="1866.6" y2="944.0" stroke="#000" stroke-width="2.6"/><ellipse cx="1875.1" cy="895.3" rx="11.3" ry="7.6" transform="rotate(-22 1875.1 895.3)" fill="#000"/><path d="M1936.6,859.2 Q1935.3,865.2 1943.3,871.7" fill="none" stroke="#000" stroke-width="4.6" stroke-linecap="round"/><path d="M1945.3,857.7 L1937.8,869.7 M1934.8,874.2 L1937.8,870.2" fill="none" stroke="#000" stroke-width="2.4" stroke-linecap="round"/><line x1="1934.8" y1="871.2" x2="1934.8" y2="972.7" stroke="#000" stroke-width="2.6"/><ellipse cx="1943.3" cy="924.6" rx="11.3" ry="7.6" transform="rotate(-22 1943.3 924.6)" fill="#000"/><path d="M2002.5,859.2 Q2001.2,865.2 2009.2,871.7" fill="none" stroke="#000" stroke-width="4.6" stroke-linecap="round"/><path d="M2011.2,857.7 L2003.7,869.7 M2000.7,874.2 L2003.7,870.2" fill="none" stroke="#000" stroke-width="2.4" stroke-linecap="round"/><line x1="2000.7" y1="871.2" x2="2000.7" y2="944.0" stroke="#000" stroke-width="2.6"/><ellipse cx="2009.2" cy="895.3" rx="11.3" ry="7.6" transform="rotate(-22 2009.2 895.3)" fill="#000"/><path d="M2149.1,859.2 Q2147.8,865.2 2155.8,871.7" fill="none" stroke="#000" stroke-width="4.6" stroke-linecap="round"/><path d="M2157.8,857.7 L2150.3,869.7 M2147.3,874.2 L2150.3,870.2" fill="none" stroke="#000" stroke-width="2.4" stroke-linecap="round"/><line x1="2147.3" y1="871.2" x2="2147.3" y2="972.7" stroke="#000" stroke-width="2.6"/><ellipse cx="2155.8" cy="924.6" rx="11.3" ry="7.6" transform="rotate(-22 2155.8 924.6)" fill="#000"/><path d="M2260.2,859.2 Q2258.9,865.2 2266.9,871.7" fill="none" stroke="#000" stroke-width="4.6" stroke-linecap="round"/><path d="M2268.9,857.7 L2261.4,869.7 M2258.4,874.2 L2261.4,870.2" fill="none" stroke="#000" stroke-width="2.4" stroke-linecap="round"/><line x1="2258.4" y1="871.2" x2="2258.4" y2="944.0" stroke="#000" stroke-width="2.6"/><ellipse cx="2266.9" cy="895.3" rx="11.3" ry="7.6" transform="rotate(-22 2266.9 895.3)" fill="#000"/><path d="M2372.5,859.2 Q2371.2,865.2 2379.2,871.7" fill="none" stroke="#000" stroke-width="4.6" stroke-linecap="round"/><path d="M2381.2,857.7 L2373.7,869.7 M2370.7,874.2 L2373.7,870.2" fill="none" stroke="#000" stroke-width="2.4" stroke-linecap="round"/><line x1="2370.7" y1="871.2" x2="2370.7" y2="972.7" stroke="#000" stroke-width="2.6"/><ellipse cx="2379.2" cy="924.6" rx="11.3" ry="7.6" transform="rotate(-22 2379.2 924.6)" fill="#000"/><path d="M2526.8,859.2 Q2525.5,865.2 2533.5,871.7" fill="none" stroke="#000" stroke-width="4.6" stroke-linecap="round"/><path d="M2535.5,857.7 L2528.0,869.7 M2525.0,874.2 L2528.0,870.2" fill="none" stroke="#000" stroke-width="2.4" stroke-linecap="round"/><line x1="2525.0" y1="871.2" x2="2525.0" y2="944.0" stroke="#000" stroke-width="2.6"/><ellipse cx="2533.5" cy="895.3" rx="11.3" ry="7.6" transform="rotate(-22 2533.5 895.3)" fill="#000"/><path d="M2666.5,859.2 Q2665.2,865.2 2673.2,871.7" fill="none" stroke="#000" stroke-width="4.6" stroke-linecap="round"/><path d="M2675.2,857.7 L2667.7,869.7 M2664.7,874.2 L2667.7,870.2" fill="none" stroke="#000" stroke-width="2.4" stroke-linecap="round"/><line x1="2664.7" y1="871.2" x2="2664.7" y2="959.8" stroke="#000" stroke-width="2.6"/><path d="M2729.5,859.2 Q2728.2,865.2 2736.2,871.7" fill="none" stroke="#000" stroke-width="4.6" stroke-linecap="round"/><path d="M2738.2,857.7 L2730.7,869.7 M2727.7,874.2 L2730.7,870.2" fill="none" stroke="#000" stroke-width="2.4" stroke-linecap="round"/><line x1="2727.7" y1="871.2" x2="2727.7" y2="966.2" stroke="#000" stroke-width="2.6"/><ellipse cx="2736.2" cy="924.6" rx="11.3" ry="7.6" transform="rotate(-22 2736.2 924.6)" fill="#000"/><path d="M2826.8,859.2 Q2825.5,865.2 2833.5,871.7" fill="none" stroke="#000" stroke-width="4.6" stroke-linecap="round"/><path d="M2835.5,857.7 L2828.0,869.7 M2825.0,874.2 L2828.0,870.2" fill="none" stroke="#000" stroke-width="2.4" stroke-linecap="round"/><line x1="2825.0" y1="871.2" x2="2825.0" y2="976.0" stroke="#000" stroke-width="2.6"/><ellipse cx="2833.5" cy="895.3" rx="11.3" ry="7.6" transform="rotate(-22 2833.5 895.3)" fill="#000"/><polygon points="2663.5,957.8 2880.0,979.6 2880.0,987.8 2663.5,966.0" fill="#000"/><ellipse cx="1787.8" cy="1163.4" rx="11.3" ry="7.6" transform="rotate(-22 1787.8 1163.4)" fill="#000"/><line x1="1797.3" y1="1161.4" x2="1797.3" y2="1108.0" stroke="#000" stroke-width="2.6"/><ellipse cx="1885.8" cy="1156.2" rx="11.3" ry="7.6" transform="rotate(-22 1885.8 1156.2)" fill="#000"/><line x1="1895.3" y1="1154.2" x2="1895.3" y2="1108.0" stroke="#000" stroke-width="2.6"/><ellipse cx="1973.3" cy="1170.5" rx="11.3" ry="7.6" transform="rotate(-22 1973.3 1170.5)" fill="#000"/><line x1="1982.8" y1="1168.5" x2="1982.8" y2="1108.0" stroke="#000" stroke-width="2.6"/><ellipse cx="2063.9" cy="1170.5" rx="11.3" ry="7.6" transform="rotate(-22 2063.9 1170.5)" fill="#000"/><line x1="2073.4" y1="1168.5" x2="2073.4" y2="1108.0" stroke="#000" stroke-width="2.6"/><path d="M1863.5,1126 L1863.5,1173 M1871.5,1140 L1870,1188" stroke="#000" stroke-width="3.2" fill="none"/><path d="M1862,1147 L1873,1142 L1873,1170 L1862,1175 Z M1865.5,1152 L1869.5,1150 L1869.5,1163 L1865.5,1165 Z" fill="#000" fill-rule="evenodd"/><polygon points="1796.0,1106.7 2074.8,1110.2 2074.8,1118.6 1796.0,1115.1" fill="#000"/><ellipse cx="2152.0" cy="1184.9" rx="11.3" ry="7.6" transform="rotate(-22 2152.0 1184.9)" fill="#000"/><line x1="2161.5" y1="1182.9" x2="2161.5" y2="1126.6" stroke="#000" stroke-width="2.6"/><ellipse cx="2238.5" cy="1192.0" rx="11.3" ry="7.6" transform="rotate(-22 2238.5 1192.0)" fill="#000"/><line x1="2248.0" y1="1190.0" x2="2248.0" y2="1120.7" stroke="#000" stroke-width="2.6"/><ellipse cx="2329.3" cy="1163.4" rx="11.3" ry="7.6" transform="rotate(-22 2329.3 1163.4)" fill="#000"/><line x1="2338.8" y1="1161.4" x2="2338.8" y2="1114.5" stroke="#000" stroke-width="2.6"/><ellipse cx="2417.7" cy="1156.2" rx="11.3" ry="7.6" transform="rotate(-22 2417.7 1156.2)" fill="#000"/><line x1="2427.2" y1="1154.2" x2="2427.2" y2="1108.5" stroke="#000" stroke-width="2.6"/><polygon points="2160.5,1124.6 2428.6,1106.5 2428.6,1114.5 2160.5,1132.6" fill="#000"/><line x1="2138.0" y1="1178.5" x2="2166.0" y2="1178.5" stroke="#000" stroke-width="1.6"/><line x1="2225.0" y1="1178.5" x2="2254.0" y2="1178.5" stroke="#000" stroke-width="1.6"/><line x1="2225.0" y1="1192.7" x2="2254.0" y2="1192.7" stroke="#000" stroke-width="1.6"/><path d="M2539.5,1126 L2539.5,1173 M2547.5,1140 L2546,1188" stroke="#000" stroke-width="3.2" fill="none"/><path d="M2538,1147 L2549,1142 L2549,1170 L2538,1175 Z M2541.5,1152 L2545.5,1150 L2545.5,1163 L2541.5,1165 Z" fill="#000" fill-rule="evenodd"/><ellipse cx="2562.3" cy="1156.2" rx="11.3" ry="7.6" transform="rotate(-22 2562.3 1156.2)" fill="#000"/><line x1="2571.8" y1="1154.2" x2="2571.8" y2="1109.2" stroke="#000" stroke-width="2.6"/><ellipse cx="2637.9" cy="1170.5" rx="11.3" ry="7.6" transform="rotate(-22 2637.9 1170.5)" fill="#000"/><line x1="2647.4" y1="1168.5" x2="2647.4" y2="1112.9" stroke="#000" stroke-width="2.6"/><ellipse cx="2716.5" cy="1170.5" rx="11.3" ry="7.6" transform="rotate(-22 2716.5 1170.5)" fill="#000"/><line x1="2726.0" y1="1168.5" x2="2726.0" y2="1116.7" stroke="#000" stroke-width="2.6"/><polygon points="2570.5,1107.2 2727.4,1114.7 2727.4,1122.3 2570.5,1114.8" fill="#000"/><polygon points="2570.5,1121.2 2648.8,1125.6 2648.8,1133.6 2570.5,1129.2" fill="#000"/><path d="M2722,1186 Q2762.5,1196 2803,1186 Q2762.5,1193 2722,1186" fill="#000" stroke="#000" stroke-width="1.2"/><ellipse cx="2805.5" cy="1163.4" rx="11.3" ry="7.6" transform="rotate(-22 2805.5 1163.4)" fill="#000"/><line x1="2815.0" y1="1161.4" x2="2815.0" y2="1122.0" stroke="#000" stroke-width="2.6"/><polygon points="2814.0,1121.2 2880.0,1126.5 2880.0,1134.1 2814.0,1128.8" fill="#000"/><polygon points="2814.0,1135.4 2880.0,1141.0 2880.0,1149.0 2814.0,1143.4" fill="#000"/><ellipse cx="2880.0" cy="1184.9" rx="11.3" ry="7.6" transform="rotate(-22 2880.0 1184.9)" fill="#000"/><line x1="2868.0" y1="1178.5" x2="2880.0" y2="1178.5" stroke="#000" stroke-width="1.6"/><path d="M1780.8,1221.2 Q1779.5,1227.2 1787.5,1233.7" fill="none" stroke="#000" stroke-width="4.6" stroke-linecap="round"/><path d="M1789.5,1219.7 L1782.0,1231.7 M1779.0,1236.2 L1782.0,1232.2" fill="none" stroke="#000" stroke-width="2.4" stroke-linecap="round"/><line x1="1779.0" y1="1233.2" x2="1779.0" y2="1336.7" stroke="#000" stroke-width="2.6"/><ellipse cx="1787.5" cy="1286.6" rx="11.3" ry="7.6" transform="rotate(-22 1787.5 1286.6)" fill="#000"/><path d="M1880.4,1221.2 Q1879.1,1227.2 1887.1,1233.7" fill="none" stroke="#000" stroke-width="4.6" stroke-linecap="round"/><path d="M1889.1,1219.7 L1881.6,1231.7 M1878.6,1236.2 L1881.6,1232.2" fill="none" stroke="#000" stroke-width="2.4" stroke-linecap="round"/><line x1="1878.6" y1="1233.2" x2="1878.6" y2="1327.9" stroke="#000" stroke-width="2.6"/><ellipse cx="1887.1" cy="1286.6" rx="11.3" ry="7.6" transform="rotate(-22 1887.1 1286.6)" fill="#000"/><path d="M1968.6,1221.2 Q1967.3,1227.2 1975.3,1233.7" fill="none" stroke="#000" stroke-width="4.6" stroke-linecap="round"/><path d="M1977.3,1219.7 L1969.8,1231.7 M1966.8,1236.2 L1969.8,1232.2" fill="none" stroke="#000" stroke-width="2.4" stroke-linecap="round"/><line x1="1966.8" y1="1233.2" x2="1966.8" y2="1320.0" stroke="#000" stroke-width="2.6"/><ellipse cx="1975.3" cy="1257.3" rx="11.3" ry="7.6" transform="rotate(-22 1975.3 1257.3)" fill="#000"/><path d="M2056.8,1221.2 Q2055.5,1227.2 2063.5,1233.7" fill="none" stroke="#000" stroke-width="4.6" stroke-linecap="round"/><path d="M2065.5,1219.7 L2058.0,1231.7 M2055.0,1236.2 L2058.0,1232.2" fill="none" stroke="#000" stroke-width="2.4" stroke-linecap="round"/><line x1="2055.0" y1="1233.2" x2="2055.0" y2="1312.2" stroke="#000" stroke-width="2.6"/><polygon points="1777.7,1334.7 2058.3,1310.0 2058.3,1318.0 1777.7,1342.7" fill="#000"/><path d="M2146.2,1221.2 Q2144.9,1227.2 2152.9,1233.7" fill="none" stroke="#000" stroke-width="4.6" stroke-linecap="round"/><path d="M2154.9,1219.7 L2147.4,1231.7 M2144.4,1236.2 L2147.4,1232.2" fill="none" stroke="#000" stroke-width="2.4" stroke-linecap="round"/><line x1="2144.4" y1="1233.2" x2="2144.4" y2="1336.7" stroke="#000" stroke-width="2.6"/><ellipse cx="2152.9" cy="1286.6" rx="11.3" ry="7.6" transform="rotate(-22 2152.9 1286.6)" fill="#000"/><path d="M2234.4,1221.2 Q2233.1,1227.2 2241.1,1233.7" fill="none" stroke="#000" stroke-width="4.6" stroke-linecap="round"/><path d="M2243.1,1219.7 L2235.6,1231.7 M2232.6,1236.2 L2235.6,1232.2" fill="none" stroke="#000" stroke-width="2.4" stroke-linecap="round"/><line x1="2232.6" y1="1233.2" x2="2232.6" y2="1328.6" stroke="#000" stroke-width="2.6"/><ellipse cx="2241.1" cy="1286.6" rx="11.3" ry="7.6" transform="rotate(-22 2241.1 1286.6)" fill="#000"/><path d="M2322.8,1221.2 Q2321.5,1227.2 2329.5,1233.7" fill="none" stroke="#000" stroke-width="4.6" stroke-linecap="round"/><path d="M2331.5,1219.7 L2324.0,1231.7 M2321.0,1236.2 L2324.0,1232.2" fill="none" stroke="#000" stroke-width="2.4" stroke-linecap="round"/><line x1="2321.0" y1="1233.2" x2="2321.0" y2="1320.4" stroke="#000" stroke-width="2.6"/><ellipse cx="2329.5" cy="1257.3" rx="11.3" ry="7.6" transform="rotate(-22 2329.5 1257.3)" fill="#000"/><path d="M2412.8,1221.2 Q2411.5,1227.2 2419.5,1233.7" fill="none" stroke="#000" stroke-width="4.6" stroke-linecap="round"/><path d="M2421.5,1219.7 L2414.0,1231.7 M2411.0,1236.2 L2414.0,1232.2" fill="none" stroke="#000" stroke-width="2.4" stroke-linecap="round"/><line x1="2411.0" y1="1233.2" x2="2411.0" y2="1312.1" stroke="#000" stroke-width="2.6"/><polygon points="2143.1,1334.7 2413.8,1310.0 2413.8,1318.0 2143.1,1342.7" fill="#000"/><path d="M2554.4,1221.2 Q2553.1,1227.2 2561.1,1233.7" fill="none" stroke="#000" stroke-width="4.6" stroke-linecap="round"/><path d="M2563.1,1219.7 L2555.6,1231.7 M2552.6,1236.2 L2555.6,1232.2" fill="none" stroke="#000" stroke-width="2.4" stroke-linecap="round"/><line x1="2552.6" y1="1233.2" x2="2552.6" y2="1334.0" stroke="#000" stroke-width="2.6"/><ellipse cx="2561.1" cy="1286.6" rx="11.3" ry="7.6" transform="rotate(-22 2561.1 1286.6)" fill="#000"/><path d="M2799.0,1221.2 Q2797.7,1227.2 2805.7,1233.7" fill="none" stroke="#000" stroke-width="4.6" stroke-linecap="round"/><path d="M2807.7,1219.7 L2800.2,1231.7 M2797.2,1236.2 L2800.2,1232.2" fill="none" stroke="#000" stroke-width="2.4" stroke-linecap="round"/><line x1="2797.2" y1="1233.2" x2="2797.2" y2="1305.7" stroke="#000" stroke-width="2.6"/><ellipse cx="2805.7" cy="1257.3" rx="11.3" ry="7.6" transform="rotate(-22 2805.7 1257.3)" fill="#000"/></g></svg>
<svg style="position:absolute;left:1426px;top:589px;" width="1454" height="760" viewBox="0 0 1454 760"><g transform="translate(-1426,-589)"><text x="1517" y="785" textLength="61" lengthAdjust="spacingAndGlyphs" font-family="Liberation Sans" font-weight="700" font-size="29" fill="#000">V<tspan font-size="23">OICE</tspan></text><text x="1463" y="914" textLength="116" lengthAdjust="spacingAndGlyphs" font-family="Liberation Sans" font-weight="700" font-size="29" fill="#000">D<tspan font-size="22">RUM </tspan>S<tspan font-size="22">ET</tspan></text><text x="1557" y="1146" textLength="21" lengthAdjust="spacingAndGlyphs" font-family="Liberation Sans" font-weight="700" font-size="27" fill="#000">V.</text><text x="1462" y="1277" textLength="117" lengthAdjust="spacingAndGlyphs" font-family="Liberation Sans" font-weight="700" font-size="29" fill="#000">D<tspan font-size="22">RUM </tspan>S<tspan font-size="22">ET</tspan></text><text x="2146" y="716" textLength="21" lengthAdjust="spacingAndGlyphs" font-family="Liberation Sans" font-weight="700" font-size="32" fill="#000">D</text><text x="2663" y="716" textLength="20" lengthAdjust="spacingAndGlyphs" font-family="Liberation Sans" font-weight="700" font-size="32" fill="#000">C</text><text x="2703" y="716" textLength="17" lengthAdjust="spacingAndGlyphs" font-family="Liberation Sans" font-weight="700" font-size="24" fill="#000">M</text><text x="1778" y="1078" textLength="40" lengthAdjust="spacingAndGlyphs" font-family="Liberation Sans" font-weight="700" font-size="32" fill="#000">E<tspan font-size="23">M</tspan></text></g></svg>
<svg style="position:absolute;left:2685px;top:669px;" width="16" height="50" viewBox="0 0 16 50"><path d="M5,4 L6,48 M10,1 L10,45" stroke="#000" stroke-width="2.2"/><polygon points="1,20 15,16 15,20.5 1,24.5" fill="#000"/><polygon points="1,29 15,25 15,29.5 1,33.5" fill="#000"/></svg>
</div></body></html>
